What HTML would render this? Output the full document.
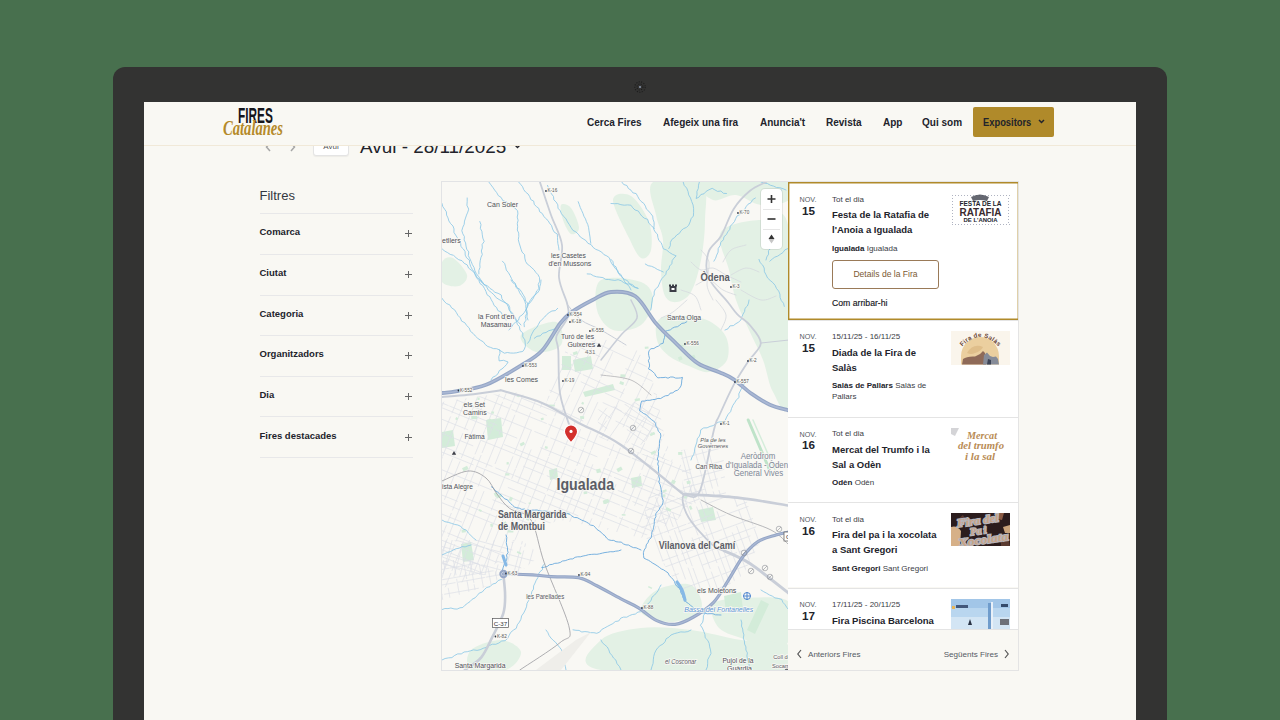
<!DOCTYPE html>
<html><head><meta charset="utf-8">
<style>
*{margin:0;padding:0;box-sizing:border-box}
html,body{width:1280px;height:720px;overflow:hidden;background:#48704e;font-family:"Liberation Sans",sans-serif}
.abs{position:absolute}
#laptop{position:absolute;left:113px;top:67px;width:1054px;height:700px;background:#333332;border-radius:12px 12px 0 0}

#screen{position:absolute;left:144px;top:102px;width:992px;height:640px;background:#f9f8f3;overflow:hidden}
#hdr{position:absolute;left:0;top:0;width:992px;height:44px;background:#f9f8f3;border-bottom:1px solid #f1e9d8;z-index:5}
.nav{position:absolute;top:12px;font-size:12px;font-weight:bold;color:#22232b;white-space:nowrap;line-height:16px}
#expo{position:absolute;left:829px;top:5px;width:81px;height:30px;background:#b08a2a;border-radius:2px}
.filt{position:absolute;left:115px;font-size:10px;font-weight:bold;color:#22232b}
.plus{position:absolute;left:260px;font-size:13px;color:#555;}
.hline{position:absolute;left:115px;width:153px;height:1px;background:#e3e4e6}

.hdri{position:absolute;left:0;top:0;z-index:6}
.pg{position:absolute;left:-144px;top:-102px;width:1280px;height:720px}
#hdr{position:absolute;left:144px;top:102px;width:992px;height:44px;background:#f9f8f3;border-bottom:1px solid #f1e9d8;z-index:5}
.hdri .nav{position:absolute;top:116.7px;font-size:11px;line-height:11px;font-weight:bold;color:#22232b;white-space:nowrap;transform:scaleX(.91);transform-origin:0 0}
#expo{position:absolute;left:973px;top:107px;width:81px;height:30px;background:#b08a2a;border-radius:2px}
.filt{position:absolute;left:259.5px;font-size:9.5px;line-height:9.5px;font-weight:bold;color:#22232b}
.plus{position:absolute;left:405px;width:7px;height:7px}
.plus:before{content:"";position:absolute;left:0;top:3px;width:7px;height:1px;background:#666}
.plus:after{content:"";position:absolute;left:3px;top:0;width:1px;height:7px;background:#666}
.hline{position:absolute;left:259.5px;width:153px;height:1px;background:#e8e8e9}

#list .t{position:absolute;left:44px;white-space:nowrap;color:#22232b}
#list .nov{left:11.5px;font-size:7.2px;line-height:7.2px;color:#555a63}
#list .day{left:14px;font-size:11.7px;line-height:11.7px;font-weight:bold}
#list .sm{font-size:8px;line-height:8px;color:#3a3d45}
#list .loc{line-height:11px;color:#3a3d45}
#list .loc b{color:#22232b}
#list .ttl{font-size:9.5px;line-height:15px;font-weight:bold}
#list .btn{font-size:8.57px;line-height:8.57px;color:#7b5a33}
#list .pgn{font-size:8.07px;line-height:8.07px;color:#555a63}
</style></head><body>
<div id="laptop"></div>
<svg id="cam" width="14" height="14" viewBox="0 0 14 14" style="position:absolute;left:633px;top:80px"><circle cx="7" cy="7" r="5.2" fill="none" stroke="#1e1e1e" stroke-width="1.1" stroke-dasharray="1.2 1.3"/><circle cx="7" cy="7" r="3" fill="none" stroke="#1e1e1e" stroke-width="1.1" stroke-dasharray="1.2 1.2"/><circle cx="7" cy="7" r="1" fill="#8f9bb0"/></svg>
<div id="screen"><div class="pg">
  <!-- date row (clipped by header) -->
  <svg class="abs" style="left:260px;top:139px" width="44" height="16" viewBox="0 0 44 16"><path d="M10 4 L6.5 8 L10 12" stroke="#a6a6a6" stroke-width="1.5" fill="none"/><path d="M31 4 L34.5 8 L31 12" stroke="#a6a6a6" stroke-width="1.5" fill="none"/></svg>
  <div class="abs" style="left:313px;top:131px;width:36px;height:25px;background:#fff;border:1px solid #e4e4e4;border-radius:3px;box-shadow:0 1px 1px rgba(0,0,0,.05)"><div class="abs" style="left:0;width:34px;top:11.2px;font-size:8px;line-height:8px;color:#555;text-align:center">Avui</div></div>
  <div class="abs" style="left:360px;top:138px;font-size:18.9px;line-height:18.9px;color:#22232b;white-space:nowrap">Avui - 28/11/2025</div>
  <svg class="abs" style="left:513px;top:143px" width="9" height="7" viewBox="0 0 9 7"><path d="M1.5 1.5 L4.5 4.5 L7.5 1.5" stroke="#22232b" stroke-width="1.4" fill="none"/></svg>

  <div id="hdr"></div><div class="hdri">
    <div class="abs" style="left:237.5px;top:104.6px;font-size:22px;line-height:22px;font-weight:bold;color:#15151c;transform:scaleX(.537);transform-origin:0 0">FIRES</div>
    <div class="abs" style="left:223px;top:118.2px;font-family:'Liberation Serif',serif;font-style:italic;font-weight:bold;font-size:20px;line-height:20px;color:#b58a2a;transform:scaleX(.73);transform-origin:0 0">Catalanes</div>
    <div class="nav" style="left:587px">Cerca Fires</div>
    <div class="nav" style="left:663px">Afegeix una fira</div>
    <div class="nav" style="left:760px">Anuncia't</div>
    <div class="nav" style="left:826px">Revista</div>
    <div class="nav" style="left:883px">App</div>
    <div class="nav" style="left:922px">Qui som</div>
    <div id="expo"></div>
    <div class="nav" style="left:983px;transform:scaleX(.85)">Expositors</div>
    <svg class="abs" style="left:1038px;top:119px" width="7" height="5" viewBox="0 0 7 5"><path d="M1 1 L3.5 3.5 L6 1" stroke="#22232b" stroke-width="1.5" fill="none"/></svg>
  </div>

  <!-- filters -->
  <div class="abs" style="left:259.5px;top:188.7px;font-size:13px;line-height:13px;color:#333842">Filtres</div>
  <div class="hline" style="top:213px"></div>
  <div class="filt" style="top:227.0px">Comarca</div><div class="plus" style="top:230.0px"></div>
  <div class="hline" style="top:254px"></div>
  <div class="filt" style="top:267.5px">Ciutat</div><div class="plus" style="top:270.5px"></div>
  <div class="hline" style="top:295px"></div>
  <div class="filt" style="top:308.5px">Categoria</div><div class="plus" style="top:311.5px"></div>
  <div class="hline" style="top:335px"></div>
  <div class="filt" style="top:349.0px">Organitzadors</div><div class="plus" style="top:352.0px"></div>
  <div class="hline" style="top:376px"></div>
  <div class="filt" style="top:389.5px">Dia</div><div class="plus" style="top:392.5px"></div>
  <div class="hline" style="top:416px"></div>
  <div class="filt" style="top:430.5px">Fires destacades</div><div class="plus" style="top:433.5px"></div>
  <div class="hline" style="top:457px"></div>

  <!-- map -->
  <div id="map" class="abs" style="left:440.5px;top:181px;width:348px;height:490px;background:#f9f8f4;border:1px solid #e2e3e5;overflow:hidden"><!--MAP--><svg width="347" height="488" viewBox="441 182 347 488" style="position:absolute;left:0;top:0;font-family:'Liberation Sans',sans-serif"><rect x="441" y="182" width="347" height="488" fill="#f9f8f4"/><path d="M652.0 182.0 C659.5 176.5 691.3 175.7 700.0 182.0 C708.7 188.3 704.0 207.0 704.0 220.0 C704.0 233.0 702.3 248.0 700.0 260.0 C697.7 272.0 694.0 285.0 690.0 292.0 C686.0 299.0 680.3 301.3 676.0 302.0 C671.7 302.7 666.7 301.3 664.0 296.0 C661.3 290.7 660.3 279.3 660.0 270.0 C659.7 260.7 662.8 249.2 662.0 240.0 C661.2 230.8 656.7 224.7 655.0 215.0 C653.3 205.3 644.5 187.5 652.0 182.0Z" fill="#e3f1e5" /><path d="M700.0 182.0 C712.7 179.0 773.3 179.0 788.0 182.0 C802.7 185.0 792.7 196.2 788.0 200.0 C783.3 203.8 768.8 205.8 760.0 205.0 C751.2 204.2 743.0 195.8 735.0 195.0 C727.0 194.2 717.8 202.2 712.0 200.0 C706.2 197.8 687.3 185.0 700.0 182.0Z" fill="#e3f1e5" /><path d="M612.0 200.0 C612.3 193.0 624.0 192.3 630.0 196.0 C636.0 199.7 644.7 213.0 648.0 222.0 C651.3 231.0 651.3 244.0 650.0 250.0 C648.7 256.0 643.7 260.0 640.0 258.0 C636.3 256.0 632.7 247.7 628.0 238.0 C623.3 228.3 611.7 207.0 612.0 200.0Z" fill="#e3f1e5" /><path d="M720.0 232.0 C725.3 223.7 748.7 220.3 760.0 220.0 C771.3 219.7 783.3 200.0 788.0 230.0 C792.7 260.0 790.7 373.0 788.0 400.0 C785.3 427.0 776.3 398.7 772.0 392.0 C767.7 385.3 766.0 370.3 762.0 360.0 C758.0 349.7 752.5 340.0 748.0 330.0 C743.5 320.0 738.3 310.0 735.0 300.0 C731.7 290.0 730.5 281.3 728.0 270.0 C725.5 258.7 714.7 240.3 720.0 232.0Z" fill="#e3f1e5" /><path d="M600.0 280.0 C607.3 275.3 631.3 278.7 640.0 282.0 C648.7 285.3 652.0 292.8 652.0 300.0 C652.0 307.2 646.7 320.0 640.0 325.0 C633.3 330.0 619.3 332.5 612.0 330.0 C604.7 327.5 598.0 318.3 596.0 310.0 C594.0 301.7 592.7 284.7 600.0 280.0Z" fill="#e3f1e5" /><path d="M660.0 318.0 C667.3 314.3 689.3 315.2 700.0 318.0 C710.7 320.8 719.7 328.0 724.0 335.0 C728.3 342.0 728.7 353.8 726.0 360.0 C723.3 366.2 714.3 371.0 708.0 372.0 C701.7 373.0 694.7 368.7 688.0 366.0 C681.3 363.3 673.3 360.3 668.0 356.0 C662.7 351.7 657.3 346.3 656.0 340.0 C654.7 333.7 652.7 321.7 660.0 318.0Z" fill="#e3f1e5" /><path d="M560.0 205.0 C561.3 203.0 567.0 204.2 570.0 208.0 C573.0 211.8 578.0 223.7 578.0 228.0 C578.0 232.3 572.7 235.3 570.0 234.0 C567.3 232.7 563.7 224.8 562.0 220.0 C560.3 215.2 558.7 207.0 560.0 205.0Z" fill="#e3f1e5" /><path d="M520.0 335.0 C523.3 330.0 548.3 320.3 555.0 322.0 C561.7 323.7 563.3 340.0 560.0 345.0 C556.7 350.0 541.7 353.7 535.0 352.0 C528.3 350.3 516.7 340.0 520.0 335.0Z" fill="#e3f1e5" /><path d="M712.0 604.0 C716.5 599.0 732.3 598.3 745.0 598.0 C757.7 597.7 780.8 595.0 788.0 602.0 C795.2 609.0 791.0 631.7 788.0 640.0 C785.0 648.3 777.2 652.0 770.0 652.0 C762.8 652.0 753.7 644.0 745.0 640.0 C736.3 636.0 723.5 634.0 718.0 628.0 C712.5 622.0 707.5 609.0 712.0 604.0Z" fill="#e3f1e5" /><path d="M600.0 640.0 C606.7 633.0 625.0 629.7 640.0 628.0 C655.0 626.3 673.3 628.0 690.0 630.0 C706.7 632.0 723.7 637.5 740.0 640.0 C756.3 642.5 780.0 640.0 788.0 645.0 C796.0 650.0 819.3 665.8 788.0 670.0 C756.7 674.2 631.3 675.0 600.0 670.0 C568.7 665.0 593.3 647.0 600.0 640.0Z" fill="#e3f1e5" /><path d="M656.0 590.0 C664.3 585.5 682.7 581.7 690.0 585.0 C697.3 588.3 703.3 603.8 700.0 610.0 C696.7 616.2 680.0 621.7 670.0 622.0 C660.0 622.3 642.3 617.3 640.0 612.0 C637.7 606.7 647.7 594.5 656.0 590.0Z" fill="#e3f1e5" /><path d="M470.0 650.0 C475.0 645.0 491.7 639.7 500.0 640.0 C508.3 640.3 519.2 647.0 520.0 652.0 C520.8 657.0 513.3 667.0 505.0 670.0 C496.7 673.0 475.8 673.3 470.0 670.0 C464.2 666.7 465.0 655.0 470.0 650.0Z" fill="#e3f1e5" /><path d="M441.0 262.0 C442.8 258.0 447.8 255.8 452.0 258.0 C456.2 260.2 465.0 270.3 466.0 275.0 C467.0 279.7 462.2 284.8 458.0 286.0 C453.8 287.2 443.8 286.0 441.0 282.0 C438.2 278.0 439.2 266.0 441.0 262.0Z" fill="#e3f1e5" /><path d="M561.0 356.0 L570.0 356.0 L570.0 370.0 L561.0 370.0Z" fill="#d3ecd9" /><path d="M572.0 360.0 L590.0 356.0 L592.0 369.0 L574.0 372.0Z" fill="#d3ecd9" /><path d="M582.0 392.0 L612.0 384.0 L614.0 390.0 L584.0 397.0Z" fill="#d3ecd9" /><path d="M485.0 420.0 L500.0 418.0 L502.0 437.0 L487.0 440.0Z" fill="#d3ecd9" /><path d="M441.0 432.0 L452.0 430.0 L454.0 446.0 L441.0 448.0Z" fill="#d3ecd9" /><path d="M460.0 544.0 L470.0 542.0 L473.0 560.0 L462.0 562.0Z" fill="#d3ecd9" /><path d="M697.0 510.0 L712.0 507.0 L715.0 520.0 L700.0 522.0Z" fill="#d3ecd9" /><path d="M746.0 630.0 L760.0 600.0 L768.0 604.0 L754.0 634.0Z" fill="#d3ecd9" /><path d="M723.0 596.0 L740.0 592.0 L742.0 610.0 L725.0 612.0Z" fill="#d3ecd9" /><path d="M548.0 470.0 L556.0 468.0 L557.0 478.0 L549.0 480.0Z" fill="#d3ecd9" /><path d="M630.0 478.0 L640.0 476.0 L641.0 486.0 L631.0 488.0Z" fill="#d3ecd9" /><clipPath id="cg1"><path d="M552.0 374.0 L566.0 348.0 L600.0 338.0 L640.0 352.0 L655.0 390.0 L662.0 430.0 L672.0 462.0 L620.0 448.0 L580.0 425.0 L545.0 405.0Z" fill="#000" /></clipPath><g clip-path="url(#cg1)"><path d="M560.1 263.4L593.8 279.1M596.0 280.2L633.4 297.6M633.5 297.6L680.5 319.6M681.3 320.0L735.5 345.2M738.5 346.6L769.2 360.9M554.3 275.8L602.7 298.3M605.4 299.6L644.9 318.0M647.7 319.3L683.5 336.0M683.6 336.0L731.9 358.6M734.5 359.8L783.4 382.6M550.4 284.3L595.7 305.4M599.1 307.0L648.0 329.8M669.0 339.6L706.4 357.1M708.3 357.9L734.8 370.3M545.2 295.4L595.2 318.7M668.8 353.1L718.9 376.4M556.9 310.8L570.0 316.9M571.5 317.6L587.3 325.0M590.1 326.3L638.7 349.0M641.0 350.0L652.1 355.2M704.1 379.5L758.4 404.8M535.8 315.4L546.3 320.3M547.8 321.0L584.5 338.1M584.7 338.2L633.1 360.8M636.5 362.4L686.2 385.6M687.9 386.3L720.5 401.6M570.3 343.3L598.9 356.7M624.4 368.5L658.3 384.4M659.8 385.1L695.1 401.5M697.4 402.6L735.1 420.2M526.9 334.6L566.8 353.1M569.3 354.3L611.8 374.2M652.7 393.2L682.4 407.1M683.6 407.6L709.1 419.5M710.4 420.1L746.5 437.0M521.4 346.4L531.7 351.2M534.4 352.4L557.5 363.2M560.4 364.5L580.3 373.8M581.8 374.5L622.5 393.5M649.5 406.1L697.3 428.4M518.3 353.1L532.8 359.8M579.8 381.7L601.5 391.9M603.8 392.9L649.4 414.2M649.9 414.4L672.2 424.8M673.2 425.3L697.9 436.8M601.7 402.5L620.9 411.4M623.9 412.8L663.0 431.1M664.1 431.6L688.6 443.0M688.8 443.1L724.6 459.8M509.5 371.9L559.5 395.2M614.6 421.0L624.3 425.5M624.9 425.7L647.6 436.3M679.5 451.2L704.0 462.6M503.6 384.5L548.1 405.2M548.9 405.6L582.2 421.1M630.6 443.7L677.0 465.3M679.3 466.4L727.4 488.8M499.6 393.2L532.5 408.6M534.2 409.4L578.5 430.0M578.7 430.1L593.5 437.0M647.3 462.1L679.1 476.9M680.2 477.5L705.2 489.1M494.7 403.7L512.4 412.0M512.8 412.2L547.1 428.2M548.4 428.8L561.1 434.7M562.5 435.3L598.9 452.3M600.3 453.0L645.7 474.1M647.2 474.9L673.2 487.0M675.7 488.2L703.9 501.3M490.3 413.0L523.7 428.5M523.9 428.7L552.3 441.9M555.4 443.4L606.9 467.4M610.2 468.9L655.1 489.8M656.8 490.6L671.4 497.4M673.8 498.6L723.1 521.5M484.3 425.9L518.9 442.0M521.1 443.0L530.4 447.4M533.2 448.7L544.2 453.8M544.6 454.0L593.6 476.8M593.6 476.9L640.8 498.9M480.1 434.9L525.4 456.0M528.1 457.3L560.4 472.4M604.0 492.7L627.7 503.8M630.8 505.2L650.8 514.5M651.7 514.9L688.7 532.2M476.0 443.6L503.1 456.2M504.6 457.0L517.4 462.9M521.0 464.6L548.7 477.5M549.3 477.8L589.7 496.6M592.1 497.8L624.6 512.9M627.0 514.0L676.7 537.2M742.2 350.2L718.6 400.8M717.8 402.4L698.4 444.1M698.0 445.0L689.5 463.1M689.0 464.3L679.9 483.9M678.2 487.3L667.8 509.8M667.1 511.3L644.8 559.0M736.0 347.3L731.3 357.5M730.6 358.8L722.8 375.7M722.2 376.9L701.6 421.0M700.0 424.6L685.6 455.4M662.0 506.0L647.6 536.9M705.4 386.7L696.3 406.1M675.2 451.5L665.8 471.5M665.4 472.5L657.2 490.0M655.8 493.1L632.5 543.0M717.3 338.7L704.2 366.9M697.4 381.5L685.6 406.8M684.4 409.2L680.1 418.6M679.3 420.2L664.8 451.2M663.9 453.4L639.4 505.7M638.5 507.7L631.8 522.2M686.2 384.6L662.1 436.3M660.8 439.1L640.6 482.5M639.4 484.9L621.4 523.6M696.8 329.1L672.3 381.7M671.4 383.7L664.8 397.8M664.2 399.1L644.8 440.7M643.8 442.8L635.7 460.1M618.5 497.1L607.2 521.2M688.8 325.4L670.9 363.8M670.4 364.9L662.5 382.0M661.2 384.5L641.1 427.8M639.8 430.5L628.0 455.8M627.4 457.2L604.7 505.8M603.8 507.6L594.4 527.9M681.0 321.7L668.2 349.0M655.1 377.3L645.1 398.6M644.9 399.0L624.2 443.4M623.9 444.1L615.7 461.7M614.4 464.4L593.0 510.4M672.9 317.9L660.3 345.1M659.4 347.0L643.2 381.8M642.7 382.7L622.0 427.2M596.9 480.9L581.0 515.0M659.4 311.6L640.6 351.8M639.2 354.9L624.7 385.9M623.5 388.5L619.2 397.7M618.1 400.1L603.5 431.5M602.7 433.1L594.4 451.0M594.3 451.1L579.5 482.8M654.9 309.5L633.9 354.5M633.8 354.7L622.0 380.0M605.7 415.0L583.1 463.5M582.8 464.0L560.5 511.9M642.7 303.8L622.8 346.4M596.8 402.2L576.6 445.6M576.4 446.0L571.2 457.0M570.9 457.7L563.3 474.0M562.1 476.6L546.5 510.0M635.8 300.6L621.8 330.7M611.8 352.1L599.9 377.7M599.0 379.7L582.1 415.8M582.1 415.8L573.5 434.3M573.3 434.8L559.3 464.7M559.0 465.5L551.1 482.3M550.8 482.9L546.0 493.2M625.8 295.9L620.3 307.7M619.5 309.3L606.7 336.9M606.6 337.1L593.8 364.4M593.8 364.5L569.2 417.3M569.0 417.7L554.7 448.2M553.7 450.5L542.1 475.2M542.1 475.4L522.5 517.5M616.8 291.8L592.9 343.1M592.5 344.0L582.6 365.1M581.6 367.4L570.0 392.1M568.9 394.6L544.2 447.6M544.2 447.6L539.3 458.0M539.0 458.6L534.0 469.3M532.9 471.7L509.7 521.6M584.9 336.4L580.0 347.0M578.9 349.2L554.7 401.2M554.2 402.2L532.0 449.8M531.4 451.2L520.1 475.4M600.3 284.1L580.4 326.7M562.5 365.1L549.5 393.0M548.2 395.8L533.8 426.7M533.5 427.3L514.0 469.0M590.1 279.3L575.5 310.4M574.3 313.0L569.6 323.1M568.3 325.9L549.8 365.6M549.4 366.5L527.4 413.8M525.9 417.0L503.2 465.5M579.1 274.2L567.8 298.4M554.9 326.2L538.6 361.0M538.5 361.3L520.5 399.8M520.5 400.0L513.0 416.0M512.0 418.1L507.6 427.7M505.9 431.2L497.0 450.2M496.3 451.7L475.6 496.2M571.1 270.5L562.9 288.1M562.8 288.3L541.1 334.8M541.1 334.9L516.4 387.8M514.9 391.0L508.9 404.0M508.5 404.8L486.8 451.4M561.7 266.1L548.1 295.3M546.6 298.4L529.9 334.4M529.5 335.1L513.9 368.6M512.7 371.2L506.8 383.8M506.0 385.6L500.2 397.9M499.0 400.5L485.8 428.8M484.8 430.9L476.1 449.7" stroke="#dde0e6" stroke-width="0.7" fill="none"/></g><clipPath id="cg1b"><path d="M441.0 402.0 L480.0 396.0 L520.0 392.0 L545.0 405.0 L580.0 425.0 L620.0 448.0 L672.0 462.0 L688.0 468.0 L695.0 500.0 L676.0 520.0 L640.0 538.0 L600.0 528.0 L560.0 520.0 L520.0 532.0 L500.0 560.0 L470.0 580.0 L441.0 588.0Z" fill="#000" /></clipPath><g clip-path="url(#cg1b)"><path d="M456.0 224.7L485.3 236.6M557.8 265.9L610.2 287.1M668.5 310.6L700.3 323.4M758.3 346.9L810.9 368.1M811.3 368.3L854.0 385.6M452.5 233.5L463.6 238.0M464.6 238.4L494.0 250.3M496.7 251.4L540.6 269.1M541.0 269.3L564.1 278.6M564.4 278.7L580.8 285.4M641.2 309.8L667.7 320.5M668.9 321.0L699.6 333.4M762.4 358.7L785.4 368.0M788.4 369.3L798.2 373.2M800.1 374.0L834.3 387.8M450.3 239.0L495.2 257.2M544.7 277.1L562.5 284.4M564.1 285.0L589.1 295.1M591.1 295.9L604.7 301.4M605.6 301.8L652.1 320.5M653.1 320.9L664.4 325.5M710.3 344.1L731.0 352.4M733.8 353.6L779.7 372.1M782.8 373.3L817.6 387.4M818.3 387.7L828.3 391.7M446.0 249.5L476.9 262.0M480.4 263.4L527.4 282.4M528.9 283.0L562.2 296.5M605.9 314.1L634.1 325.5M635.8 326.2L682.3 345.0M685.8 346.4L702.3 353.1M735.7 366.6L788.1 387.8M788.3 387.8L824.2 402.3M486.7 271.4L526.9 287.6M654.6 339.2L678.5 348.9M679.6 349.3L695.0 355.5M698.6 357.0L711.5 362.2M712.3 362.5L725.2 367.7M728.0 368.9L776.1 388.3M779.2 389.5L788.7 393.4M792.2 394.8L804.7 399.9M806.5 400.6L828.2 409.4M441.2 261.4L494.9 283.1M518.3 292.5L557.5 308.4M557.7 308.5L602.2 326.4M650.5 345.9L704.3 367.7M705.7 368.3L720.0 374.0M723.6 375.5L745.9 384.5M746.4 384.7L761.6 390.8M765.0 392.2L777.8 397.4M438.0 269.3L491.3 290.9M494.0 291.9L517.8 301.6M519.0 302.1L563.0 319.8M565.1 320.7L595.9 333.1M693.0 372.4L710.1 379.2M724.1 384.9L773.8 405.0M773.8 405.0L823.4 425.1M434.4 278.2L468.0 291.8M468.4 291.9L502.7 305.8M503.2 306.0L540.3 321.0M542.2 321.8L568.8 332.5M661.0 369.8L715.6 391.8M716.1 392.0L748.5 405.1M749.8 405.7L789.0 421.5M792.6 422.9L822.9 435.2M431.1 286.5L486.1 308.7M487.7 309.4L525.6 324.7M527.2 325.3L575.8 344.9M576.0 345.0L624.9 364.8M628.5 366.3L654.8 376.9M656.8 377.7L707.1 398.0M710.3 399.3L752.5 416.4M753.6 416.8L786.3 430.0M429.4 290.7L448.8 298.5M451.1 299.4L466.9 305.8M468.1 306.3L490.4 315.3M492.4 316.1L544.4 337.1M598.2 358.9L628.0 370.9M628.4 371.1L678.5 391.3M680.2 392.0L730.8 412.4M731.5 412.7L778.9 431.9M779.3 432.0L789.8 436.3M789.9 436.3L837.7 455.6M425.9 299.2L458.9 312.5M461.3 313.4L501.1 329.5M501.5 329.7L556.2 351.8M556.5 351.9L586.2 363.9M589.9 365.4L602.2 370.4M635.9 384.0L660.6 393.9M662.7 394.8L713.0 415.1M714.4 415.7L727.8 421.1M727.9 421.2L780.5 442.4M782.7 443.3L795.9 448.6M797.6 449.3L846.6 469.1M421.9 309.2L461.8 325.3M486.2 335.2L520.1 348.9M569.5 368.9L613.0 386.4M613.2 386.5L642.5 398.4M643.3 398.7L692.9 418.7M696.0 420.0L748.7 441.3M752.1 442.6L779.8 453.8M780.5 454.1L791.5 458.5M419.9 314.0L447.2 325.1M448.2 325.5L469.7 334.1M470.9 334.6L485.3 340.5M487.0 341.1L522.4 355.5M525.0 356.5L544.3 364.3M546.6 365.2L564.0 372.2M565.4 372.8L599.7 386.7M602.0 387.6L631.8 399.7M634.7 400.8L683.9 420.7M710.3 431.4L729.8 439.3M760.6 451.7L778.2 458.8M779.4 459.3L822.6 476.7M416.7 322.0L465.4 341.7M467.4 342.5L516.7 362.4M555.6 378.1L569.2 383.6M635.3 410.3L679.3 428.1M679.3 428.1L720.0 444.6M721.3 445.1L752.8 457.8M753.7 458.2L795.3 475.0M414.5 327.6L449.4 341.7M452.1 342.8L469.4 349.8M470.1 350.1L498.3 361.5M498.7 361.6L510.5 366.4M511.3 366.7L543.9 379.9M581.7 395.2L614.9 408.6M615.1 408.7L637.2 417.6M657.2 425.7L686.6 437.5M690.2 439.0L708.1 446.2M710.0 447.0L728.5 454.5M732.1 455.9L778.1 474.5M781.4 475.8L795.2 481.4M442.9 348.3L487.5 366.3M490.0 367.3L511.8 376.1M513.2 376.7L562.8 396.7M564.7 397.5L605.8 414.1M608.8 415.3L630.0 423.9M632.1 424.8L659.4 435.8M660.0 436.0L699.0 451.8M737.6 467.4L780.6 484.8M780.8 484.8L815.9 499.0M427.7 350.7L459.4 363.5M460.0 363.7L494.4 377.6M496.7 378.5L513.4 385.3M515.7 386.2L566.0 406.6M566.0 406.6L579.2 411.9M613.3 425.6L634.7 434.3M634.8 434.3L657.1 443.3M657.7 443.6L668.5 448.0M669.7 448.5L724.0 470.4M727.0 471.6L754.3 482.6M755.9 483.3L796.1 499.5M404.9 351.4L451.2 370.1M452.1 370.4L480.6 382.0M481.8 382.4L517.6 396.9M519.8 397.8L542.6 407.0M542.7 407.0L567.6 417.1M569.8 418.0L591.3 426.7M593.6 427.6L633.5 443.8M635.5 444.5L664.5 456.3M664.8 456.4L710.9 475.0M711.2 475.1L763.5 496.2M765.8 497.2L795.4 509.1M429.1 368.3L461.5 381.4M462.4 381.8L514.6 402.8M514.6 402.9L545.8 415.5M598.2 436.6L638.8 453.0M640.5 453.7L663.7 463.1M664.2 463.3L702.5 478.8M718.1 485.1L731.2 490.4M733.2 491.2L778.1 509.3M399.5 364.6L440.0 380.9M443.6 382.4L453.2 386.2M455.7 387.2L507.9 408.3M510.5 409.4L545.8 423.6M547.5 424.3L584.7 439.4M585.8 439.8L629.3 457.4M631.0 458.1L652.2 466.6M700.1 486.0L718.8 493.6M719.0 493.6L739.4 501.9M741.7 502.8L762.1 511.1M762.5 511.2L780.1 518.3M395.1 375.5L430.5 389.9M432.1 390.5L443.3 395.0M446.1 396.1L472.2 406.7M473.2 407.1L492.6 414.9M493.4 415.2L530.7 430.3M533.4 431.4L547.5 437.1M549.3 437.8L576.1 448.7M577.7 449.3L596.3 456.8M641.8 475.2L692.4 495.6M695.0 496.7L749.7 518.8M752.6 520.0L803.6 540.6M418.2 393.8L447.6 405.7M448.4 406.0L496.2 425.3M602.1 468.1L653.2 488.8M654.3 489.2L673.6 497.0M675.7 497.8L703.4 509.1M755.4 530.1L802.7 549.2M410.1 395.3L461.8 416.2M462.2 416.4L491.3 428.1M494.6 429.5L516.2 438.2M539.4 447.6L579.5 463.8M582.9 465.1L610.6 476.3M613.0 477.3L649.8 492.2M650.3 492.4L686.2 506.9M689.5 508.2L714.7 518.4M715.9 518.9L730.4 524.8M732.5 525.6L760.6 536.9M761.7 537.4L793.5 550.2M386.3 397.3L418.0 410.1M418.6 410.3L467.2 429.9M503.1 444.5L529.2 455.0M529.2 455.0L563.7 469.0M565.6 469.7L595.8 481.9M616.8 490.4L666.2 510.4M669.2 511.5L690.5 520.2M743.9 541.8L798.6 563.9M384.5 401.7L428.8 419.6M480.2 440.4L530.1 460.6M530.4 460.7L580.9 481.1M581.3 481.2L629.0 500.5M631.5 501.5L642.1 505.8M644.7 506.9L655.7 511.3M659.2 512.7L678.4 520.5M681.2 521.6L719.2 537.0M721.8 538.0L731.7 542.0M733.7 542.8L788.0 564.8M381.5 409.3L430.0 428.9M431.9 429.6L472.2 445.9M522.3 466.2L542.5 474.3M545.8 475.7L575.4 487.6M577.3 488.4L619.0 505.2M620.2 505.7L665.0 523.8M681.5 530.5L718.3 545.4M721.9 546.8L751.1 558.6M751.5 558.8L777.0 569.1M377.0 420.3L416.4 436.2M418.8 437.2L456.0 452.2M457.8 453.0L491.4 466.5M494.4 467.8L512.6 475.1M513.7 475.6L562.3 495.2M564.1 495.9L593.9 508.0M594.7 508.3L616.1 516.9M618.2 517.8L654.2 532.3M675.1 540.8L710.6 555.1M713.0 556.1L760.0 575.1M374.9 425.5L406.8 438.4M409.8 439.6L433.8 449.3M436.1 450.2L472.5 464.9M475.7 466.2L509.0 479.7M509.3 479.8L544.2 493.9M546.2 494.7L571.6 504.9M571.7 505.0L588.3 511.7M591.4 513.0L627.6 527.6M630.3 528.7L669.0 544.3M692.1 553.7L714.7 562.8M717.9 564.0L765.1 583.1M371.9 432.8L413.7 449.7M506.9 487.4L530.4 496.9M531.0 497.1L577.3 515.8M651.8 545.9L673.4 554.6M718.1 572.7L770.4 593.8M368.8 440.6L412.8 458.4M414.1 458.9L439.9 469.3M440.7 469.7L490.9 490.0M493.3 490.9L525.1 503.8M621.5 542.7L676.7 565.0M678.2 565.6L697.0 573.2M697.8 573.6L742.2 591.5M745.3 592.7L771.1 603.1M365.5 448.7L392.3 459.6M393.9 460.2L433.0 476.0M491.6 499.7L513.7 508.6M516.5 509.7L563.9 528.9M564.6 529.2L607.3 546.4M608.7 547.0L645.3 561.8M362.3 456.7L400.5 472.1M401.6 472.6L439.6 487.9M465.7 498.5L496.9 511.1M498.4 511.7L531.9 525.2M535.1 526.5L579.8 544.6M580.1 544.7L627.3 563.8M629.4 564.7L661.3 577.5M662.9 578.2L713.3 598.5M714.5 599.0L761.5 618.0M373.1 467.7L394.1 476.2M431.2 491.2L456.7 501.4M459.7 502.7L495.8 517.3M528.8 530.6L538.2 534.4M539.0 534.7L585.0 553.3M585.7 553.6L630.4 571.7M667.5 586.6L686.4 594.3M687.9 594.9L707.5 602.8M710.1 603.8L745.4 618.1M357.4 468.9L387.3 481.0M388.6 481.5L438.8 501.8M439.4 502.1L459.6 510.2M460.7 510.6L511.1 531.0M553.7 548.2L566.2 553.3M568.5 554.2L579.0 558.4M672.6 596.3L707.7 610.4M707.8 610.5L721.2 615.9M353.4 478.7L404.0 499.2M407.3 500.5L461.0 522.2M510.8 542.3L539.0 553.7M539.4 553.9L559.6 562.0M575.8 568.6L630.1 590.5M682.0 611.5L723.7 628.4M351.6 483.1L404.5 504.5M404.8 504.6L426.1 513.2M523.1 552.4L550.2 563.4M550.8 563.6L585.4 577.6M588.2 578.7L612.3 588.5M614.3 589.3L652.7 604.8M653.7 605.2L694.9 621.8M697.4 622.8L751.4 644.6M347.6 493.0L400.7 514.4M403.5 515.6L444.4 532.1M446.3 532.9L482.5 547.5M485.0 548.5L536.4 569.3M539.4 570.5L555.3 576.9M557.6 577.9L610.4 599.2M611.0 599.4L665.5 621.5M668.2 622.5L704.9 637.3M344.3 501.2L367.7 510.6M413.9 529.3L468.0 551.2M469.0 551.6L499.8 564.0M500.7 564.4L548.8 583.8M552.0 585.1L568.8 591.9M570.2 592.5L602.4 605.5M603.5 605.9L647.0 623.5M648.1 623.9L693.9 642.4M696.1 643.3L714.0 650.6M715.8 651.3L749.2 664.8M341.1 509.3L386.7 527.7M386.7 527.7L440.5 549.4M440.9 549.6L458.4 556.7M459.1 556.9L485.6 567.7M529.4 585.4L567.8 600.9M569.0 601.3L608.0 617.1M610.1 618.0L642.2 630.9M706.7 657.0L753.8 676.0M402.0 540.9L429.9 552.2M432.7 553.4L446.4 558.9M446.9 559.1L495.9 578.9M497.1 579.4L527.1 591.5M528.6 592.1L581.8 613.6M583.6 614.3L632.8 634.2M633.5 634.5L681.5 653.9M684.8 655.2L732.2 674.4M336.6 520.4L386.3 540.5M387.6 541.0L405.1 548.1M408.3 549.4L423.6 555.6M425.9 556.5L459.3 570.0M482.3 579.3L517.7 593.6M521.1 595.0L539.7 602.5M542.0 603.4L589.9 622.7M590.3 622.9L644.9 645.0M646.2 645.5L701.3 667.8M411.3 558.8L434.6 568.2M495.0 592.6L537.0 609.6M539.6 610.6L575.7 625.2M577.8 626.0L601.2 635.5M604.6 636.9L630.9 647.5M634.5 648.9L667.4 662.2M668.7 662.8L684.9 669.3M329.1 538.8L346.7 545.9M347.2 546.1L363.3 552.6M364.7 553.1L398.9 567.0M476.7 598.4L492.4 604.7M494.0 605.4L543.1 625.2M544.1 625.6L590.4 644.3M590.5 644.4L630.5 660.5M632.5 661.3L648.4 667.8M651.6 669.1L681.9 681.3M684.2 682.2L725.9 699.1M327.1 543.9L359.8 557.1M384.7 567.1L404.2 575.0M458.9 597.1L503.6 615.2M504.9 615.7L537.5 628.9M538.8 629.4L558.0 637.2M560.7 638.3L598.0 653.3M599.7 654.0L637.4 669.3M637.5 669.3L685.9 688.9M687.2 689.4L740.9 711.1M324.7 549.7L354.3 561.7M355.6 562.2L369.4 567.8M370.4 568.2L415.0 586.2M416.1 586.6L463.6 605.9M463.9 606.0L486.2 615.0M541.6 637.4L558.0 644.0M558.8 644.3L585.3 655.0M585.4 655.1L617.4 668.0M619.8 669.0L667.4 688.2M669.7 689.1L691.5 697.9M693.9 698.9L705.6 703.6M343.5 566.8L361.7 574.1M363.7 574.9L391.4 586.1M392.6 586.6L411.9 594.4M414.1 595.3L427.6 600.7M483.8 623.5L525.4 640.3M619.4 678.2L660.0 694.7M663.2 695.9L712.2 715.7M317.8 566.9L354.4 581.7M357.6 583.0L406.2 602.6M408.2 603.4L449.7 620.2M470.2 628.5L492.3 637.4M494.5 638.3L525.3 650.7M525.7 650.9L575.5 671.0M577.1 671.7L620.7 689.3M622.3 689.9L645.2 699.2M681.5 713.8L715.3 727.5M315.2 573.3L360.2 591.5M363.3 592.7L386.9 602.3M388.1 602.7L432.1 620.5M461.3 632.3L479.9 639.9M483.4 641.3L503.7 649.5M507.1 650.8L561.1 672.6M563.9 673.8L616.3 695.0M619.2 696.1L642.3 705.4M644.2 706.2L675.3 718.8M677.8 719.8L719.5 736.6M336.7 589.4L387.5 609.9M418.3 622.4L473.5 644.7M522.4 664.5L533.2 668.8M533.3 668.8L555.2 677.7M556.2 678.1L577.0 686.5M578.3 687.0L611.5 700.5M615.0 701.9L627.5 706.9M627.8 707.0L680.2 728.2M682.6 729.2L729.6 748.2M309.2 588.2L347.6 603.7M350.4 604.8L373.6 614.2M374.5 614.6L417.4 631.9M418.0 632.2L443.7 642.6M484.2 658.9L530.7 677.7M533.9 679.0L586.8 700.3M586.8 700.4L600.1 705.7M603.3 707.0L646.2 724.3M648.2 725.2L662.8 731.1M666.5 732.6L685.3 740.2M305.6 597.0L331.1 607.3M387.6 630.1L431.4 647.8M432.8 648.4L477.1 666.3M477.8 666.6L487.1 670.4M489.9 671.5L501.2 676.0M502.4 676.5L521.3 684.2M522.0 684.4L558.4 699.1M559.7 699.7L608.6 719.4M610.5 720.2L650.6 736.4M651.3 736.7L704.8 758.3M832.5 377.7L817.2 415.6M803.0 450.8L780.9 505.5M779.4 509.2L761.2 554.2M739.3 608.4L724.6 644.8M683.8 745.9L679.9 755.6M824.6 374.5L803.6 426.3M802.6 428.9L796.0 445.2M760.3 533.5L755.3 546.0M754.2 548.7L744.3 573.1M743.1 576.1L724.2 622.9M723.2 625.4L704.5 671.7M703.2 674.9L684.1 722.1M682.8 725.3L668.9 759.8M813.7 370.1L803.6 395.0M802.3 398.2L785.7 439.2M785.0 441.0L771.8 473.8M771.5 474.5L764.8 491.2M764.0 493.1L758.9 505.7M758.7 506.1L747.7 533.3M740.0 552.4L720.8 600.1M720.3 601.3L700.8 649.5M683.2 692.9L678.5 704.6M677.1 708.1L657.4 757.0M808.6 368.1L790.7 412.4M789.4 415.7L780.7 437.3M779.6 439.9L771.3 460.4M770.4 462.7L761.6 484.5M760.7 486.8L739.0 540.5M738.7 541.1L725.5 573.9M724.8 575.7L703.9 627.3M703.2 629.2L690.6 660.3M689.9 662.0L677.7 692.2M799.8 364.5L778.3 417.8M772.4 432.3L760.5 461.6M759.2 464.9L736.9 520.2M735.5 523.6L721.1 559.2M720.9 559.8L711.4 583.2M710.9 584.6L706.2 596.0M704.9 599.4L685.3 648.0M684.7 649.3L672.5 679.4M671.4 682.3L661.9 705.7M661.1 707.7L641.6 756.0M791.3 361.1L771.0 411.3M770.0 413.6L763.8 429.0M762.9 431.3L757.2 445.4M756.3 447.6L745.3 474.8M744.0 478.0L735.1 500.2M733.9 503.0L719.0 539.9M718.2 542.0L700.6 585.5M700.2 586.6L684.3 626.0M683.6 627.7L663.0 678.5M662.2 680.5L647.8 716.2M647.5 716.8L631.3 757.1M755.7 424.4L742.5 457.1M741.2 460.3L733.2 480.1M732.7 481.2L724.6 501.4M724.2 502.4L710.4 536.4M687.5 593.1L671.0 634.1M669.9 636.7L658.7 664.5M657.6 667.3L641.5 707.0M640.5 709.5L635.5 721.9M634.2 725.2L612.2 779.5M772.7 353.5L766.3 369.4M766.0 370.1L758.2 389.5M757.8 390.5L738.1 439.2M736.9 442.1L715.0 496.4M713.7 499.5L693.2 550.3M692.7 551.6L685.7 569.0M685.1 570.4L676.5 591.7M675.5 594.1L666.9 615.3M666.2 617.2L649.1 659.4M648.2 661.8L627.6 712.6M627.0 714.3L609.3 758.1M767.4 351.4L756.6 378.2M755.5 381.0L746.1 404.3M745.9 404.6L731.0 441.6M729.8 444.5L710.0 493.6M700.1 518.1L692.2 537.7M692.0 538.2L671.2 589.7M669.7 593.3L650.9 639.9M649.7 642.8L639.3 668.6M638.6 670.2L621.8 711.9M620.9 714.0L606.6 749.6M757.8 347.5L743.7 382.6M742.6 385.3L736.8 399.5M707.5 472.1L698.2 495.0M697.4 497.0L689.4 516.9M689.3 517.2L678.2 544.6M677.8 545.5L671.3 561.7M671.0 562.4L650.4 613.5M649.0 616.8L635.3 650.7M608.0 718.4L599.4 739.7M748.2 343.6L740.2 363.4M739.4 365.2L734.6 377.3M733.6 379.7L727.0 396.0M726.1 398.2L720.7 411.6M719.5 414.5L707.3 444.9M706.9 445.7L684.5 501.3M683.6 503.4L679.7 513.1M679.7 513.1L667.7 542.8M667.4 543.7L657.9 567.1M657.5 568.2L644.3 600.8M643.4 602.9L621.9 656.2M620.5 659.7L614.7 674.0M614.3 674.9L593.1 727.5M739.4 340.1L733.1 355.5M731.9 358.5L712.8 405.7M712.8 405.8L708.6 416.2M707.5 418.8L696.8 445.4M695.6 448.4L691.7 458.0M669.6 512.8L654.4 550.2M653.3 553.1L637.2 593.0M637.1 593.2L630.0 610.8M615.7 646.0L607.3 667.0M606.8 668.1L588.2 714.2M587.7 715.4L571.2 756.3M731.4 336.9L712.1 384.7M697.9 419.9L683.5 455.5M683.4 455.8L663.6 504.8M662.9 506.3L656.1 523.4M655.0 526.0L646.2 547.7M645.4 549.6L632.4 581.9M632.3 582.1L621.6 608.7M621.0 610.2L616.9 620.2M616.7 620.9L598.6 665.6M597.1 669.2L588.0 691.9M587.9 691.9L575.0 724.0M723.2 333.5L709.3 368.0M707.9 371.4L699.5 392.2M699.2 392.8L684.5 429.4M684.0 430.5L675.5 451.7M674.6 453.9L657.5 496.2M657.1 497.1L639.3 541.2M639.1 541.7L616.8 596.8M588.4 667.1L581.4 684.5M574.3 702.1L561.6 733.5M716.0 330.6L698.7 373.5M676.7 428.0L669.7 445.3M668.4 448.4L658.0 474.2M657.7 475.0L638.5 522.5M638.0 523.8L618.9 571.0M618.9 571.0L607.2 600.0M607.0 600.4L595.9 627.9M594.6 631.1L573.6 683.2M573.5 683.4L562.9 709.7M705.9 326.6L697.0 348.8M696.0 351.3L687.2 372.9M686.6 374.6L679.2 392.9M678.5 394.4L670.5 414.3M669.3 417.2L651.7 460.9M651.6 461.0L633.6 505.7M600.5 587.6L590.2 613.0M590.2 613.1L569.7 663.8M569.4 664.4L553.6 703.6M699.6 324.0L682.8 365.6M682.7 365.9L668.3 401.5M668.2 401.7L663.8 412.7M662.7 415.4L640.7 469.9M639.4 473.1L622.3 515.3M621.7 517.0L602.1 565.4M601.3 567.3L584.1 610.0M583.4 611.7L569.9 645.1M568.9 647.7L560.0 669.5M559.3 671.2L553.7 685.3M552.2 688.9L538.0 724.1M690.9 320.5L680.2 346.9M678.8 350.5L668.2 376.7M667.2 379.1L663.4 388.7M662.5 390.7L643.4 438.0M643.3 438.2L621.5 492.3M607.0 528.2L598.7 548.7M590.9 568.0L573.4 611.3M572.4 613.7L551.6 665.3M550.1 668.9L541.1 691.3M682.6 317.2L661.6 369.3M661.5 369.5L654.9 385.7M654.4 387.0L649.6 398.9M649.1 400.1L628.4 451.3M615.1 484.2L600.9 519.6M600.1 521.5L591.4 543.0M586.1 556.0L577.8 576.5M577.8 576.7L558.5 624.4M557.4 627.0L545.6 656.2M544.4 659.3L534.7 683.3M534.5 683.7L513.6 735.5M673.6 313.5L667.5 328.8M666.3 331.7L658.2 351.8M636.7 404.9L614.8 459.3M614.5 459.9L592.3 514.8M590.8 518.5L586.5 529.2M585.8 530.9L570.7 568.4M569.4 571.5L563.7 585.7M563.2 586.9L541.6 640.5M533.9 659.5L526.2 678.4M525.0 681.3L515.2 705.6M666.9 310.8L660.9 325.6M659.9 328.2L643.4 368.9M642.4 371.4L623.0 419.4M617.1 433.9L608.3 455.9M607.4 458.0L591.9 496.5M590.9 499.0L579.9 526.0M561.5 571.7L556.3 584.4M555.2 587.2L544.8 613.0M543.5 616.2L531.6 645.6M655.7 306.3L642.7 338.5M642.4 339.3L626.9 377.6M625.6 380.8L618.6 398.3M591.9 464.3L572.0 513.6M571.3 515.3L557.4 549.7M556.2 552.6L541.5 589.1M534.9 605.3L524.3 631.5M523.8 632.8L503.3 683.5M649.3 303.7L631.7 347.2M630.8 349.5L620.7 374.4M619.8 376.6L599.2 427.6M598.0 430.6L590.3 449.7M589.9 450.6L568.8 502.9M568.4 504.0L555.8 535.0M554.9 537.5L548.8 552.4M547.7 555.0L541.3 570.9M540.1 574.0L536.3 583.3M536.1 584.0L516.7 632.0M502.1 668.0L494.7 686.3M642.4 300.9L630.5 330.4M630.4 330.6L620.5 355.2M619.1 358.6L615.2 368.4M614.2 370.7L606.2 390.6M605.7 391.9L583.4 447.1M582.9 448.4L575.7 466.0M574.6 468.9L557.4 511.4M556.6 513.3L535.4 565.9M534.6 567.9L512.9 621.5M512.2 623.2L493.6 669.4M493.1 670.5L481.9 698.3M633.0 297.1L619.2 331.3M618.8 332.2L596.6 387.3M595.4 390.2L591.5 399.8M579.7 429.0L570.4 452.1M569.0 455.5L550.4 501.6M550.3 501.9L546.3 511.6M545.3 514.1L532.8 545.0M532.4 546.0L521.7 572.5M520.8 574.8L509.3 603.2M492.6 644.7L474.4 689.7M625.7 294.2L606.3 342.2M606.1 342.6L600.7 356.1M600.1 357.5L596.4 366.8M595.6 368.8L583.0 400.0M581.7 403.2L564.9 444.7M564.4 445.9L555.9 467.0M555.0 469.3L546.1 491.2M544.9 494.4L535.1 518.5M534.6 519.8L521.9 551.2M521.3 552.6L511.7 576.4M510.5 579.5L493.7 621.0M493.6 621.3L476.2 664.3M474.9 667.6L459.0 706.8M615.1 289.9L604.7 315.6M604.2 316.8L597.8 332.7M596.9 335.0L588.0 357.0M587.9 357.1L569.7 402.3M568.4 405.4L547.9 456.1M547.6 457.0L526.2 510.0M524.9 513.1L504.2 564.5M503.6 565.8L483.1 616.7M482.9 617.1L478.5 628.1M478.0 629.2L456.5 682.4M568.7 379.0L553.6 416.2M552.9 418.2L545.0 437.7M544.2 439.6L532.3 469.2M532.1 469.5L510.0 524.2M509.3 526.0L499.0 551.5M497.8 554.4L476.5 607.1M475.1 610.6L464.5 636.9M464.0 638.1L442.2 692.2M597.5 282.8L589.3 303.1M588.8 304.5L576.3 335.3M576.0 336.1L565.7 361.5M565.5 362.2L552.2 394.9M530.2 449.4L516.5 483.2M503.0 516.7L490.8 547.0M490.8 547.1L476.0 583.5M454.6 636.6L449.2 650.0M448.3 652.0L439.0 675.3M579.2 309.1L559.4 358.0M558.4 360.6L546.3 390.4M545.6 392.2L539.4 407.6M530.4 429.9L514.9 468.3M514.6 468.9L510.7 478.7M496.0 515.1L485.0 542.2M483.8 545.3L472.0 574.4M461.9 599.4L450.0 628.9M448.7 632.1L436.2 662.9M584.3 277.4L566.6 321.3M565.2 324.8L558.2 341.9M558.2 341.9L550.4 361.3M550.2 361.7L544.4 376.2M544.3 376.3L531.0 409.4M529.8 412.2L513.4 452.9M512.0 456.4L490.1 510.6M488.9 513.5L472.2 554.9M471.0 557.8L466.6 568.8M465.2 572.1L449.3 611.6M448.3 614.0L436.9 642.3M436.3 643.7L426.7 667.4M560.2 300.3L556.0 310.5M555.9 310.9L550.6 323.8M549.6 326.5L542.5 344.0M541.8 345.8L527.8 380.3M527.6 381.0L523.6 390.9M522.1 394.6L514.8 412.5M513.9 414.9L494.0 464.0M483.0 491.2L463.3 540.1M462.0 543.2L450.9 570.8M450.0 573.0L439.6 598.8M564.8 269.5L547.2 312.9M529.7 356.4L511.0 402.7M510.5 403.8L501.5 426.1M500.1 429.4L484.8 467.5M484.1 469.1L477.1 486.5M475.6 490.2L454.9 541.5M453.8 544.1L445.9 563.8M445.8 563.9L441.7 574.0M440.3 577.6L425.7 613.7M425.6 614.0L421.5 624.1M421.3 624.6L411.3 649.4M556.5 266.2L550.4 281.4M549.2 284.3L540.2 306.6M539.8 307.6L523.0 349.2M522.6 350.2L502.7 399.5M501.7 401.9L494.0 421.0M493.4 422.5L481.0 453.0M480.2 455.0L468.6 483.9M467.4 486.7L447.1 537.1M446.6 538.3L428.4 583.3M427.7 585.2L412.4 622.9M551.0 264.0L531.0 313.4M529.8 316.3L512.1 360.2M511.5 361.6L491.6 410.9M491.0 412.4L484.1 429.5M483.8 430.3L474.0 454.4M473.1 456.7L451.4 510.5M450.4 513.0L446.4 522.7M445.6 524.7L427.3 570.0M426.3 572.4L413.0 605.4M540.5 259.7L523.5 301.7M522.0 305.3L500.8 357.9M493.1 376.9L488.9 387.4M487.6 390.5L469.2 436.0M468.6 437.5L460.3 458.1M459.0 461.4L443.4 499.9M436.5 517.0L415.4 569.2M414.9 570.4L410.0 582.5M409.5 583.8L398.5 611.1M397.4 613.8L377.6 662.9M533.2 256.8L524.4 278.4M518.4 293.2L507.0 321.5M505.7 324.8L495.0 351.2M494.8 351.7L474.4 402.2M473.8 403.6L469.8 413.6M469.2 415.0L463.3 429.6M461.8 433.3L452.7 456.0M451.8 458.2L436.5 496.1M435.7 497.9L416.5 545.6M415.4 548.1L401.8 581.9M401.4 582.8L379.9 636.0M523.8 253.0L504.1 301.6M481.3 358.1L464.3 400.3M463.8 401.5L441.7 456.0M441.5 456.6L422.6 503.5M422.5 503.7L402.2 553.9M401.6 555.4L396.0 569.1M374.8 621.7L358.5 662.0M516.8 250.2L507.1 274.1M506.6 275.4L492.2 311.0M491.8 311.9L487.7 322.2M487.3 323.1L468.3 370.1M468.0 370.8L450.9 413.3M449.6 416.5L435.9 450.3M434.9 452.9L412.4 508.4M396.2 548.7L391.3 560.8M390.1 563.8L378.5 592.5M377.6 594.6L373.6 604.4M372.3 607.8L361.1 635.4M505.8 245.7L485.4 296.3M484.4 298.7L480.6 308.1M479.4 311.2L466.7 342.6M447.9 389.2L438.3 412.8M437.6 414.6L433.8 423.9M432.4 427.5L416.6 466.6M415.4 469.4L397.5 513.8M396.0 517.5L389.0 534.8M388.0 537.4L375.1 569.3M357.5 612.9L335.2 668.0M478.2 295.7L459.8 341.4M416.6 448.2L403.4 480.9M402.8 482.3L382.5 532.7M381.0 536.3L366.8 571.6M353.2 605.2L333.4 654.1M491.9 240.1L470.1 294.1M470.0 294.4L455.5 330.2M454.5 332.8L443.1 360.9M442.8 361.7L432.9 386.1M432.6 387.0L428.1 398.2M427.3 400.2L412.1 437.7M411.2 439.9L401.3 464.5M366.3 551.2L360.7 564.8M359.7 567.5L345.9 601.6M475.4 250.3L456.7 296.6M441.7 333.6L428.4 366.6M428.0 367.6L406.7 420.5M406.4 421.0L398.8 439.9M382.3 480.9L361.9 531.2M361.6 532.0L356.1 545.5M355.5 547.1L342.6 579.1M342.2 579.9L333.7 601.0M333.5 601.6L321.5 631.3M475.5 233.5L458.1 276.6M456.8 279.8L441.6 317.5M441.5 317.6L422.0 366.0M420.9 368.8L407.1 402.8M406.8 403.6L389.4 446.7M388.5 448.9L366.7 502.9M366.4 503.5L358.1 524.0M356.9 527.1L338.2 573.3M337.3 575.5L327.0 601.2M326.5 602.4L305.0 655.5M464.7 229.1L456.9 248.6M456.2 250.2L437.0 297.8M436.6 298.9L427.4 321.6M427.0 322.6L413.2 356.6M403.1 381.7L385.3 425.8M384.6 427.6L372.9 456.4M372.9 456.5L366.9 471.4M351.5 509.3L329.3 564.3M328.0 567.5L319.5 588.7M455.9 225.5L447.5 246.2M446.9 247.9L437.1 272.0M436.8 272.8L428.1 294.3M400.4 362.8L395.0 376.4M380.7 411.6L363.9 453.4M345.2 499.5L329.1 539.3M328.0 542.1L321.4 558.3M321.4 558.4L317.1 569.2M316.5 570.5L304.7 599.8" stroke="#dde0e6" stroke-width="0.7" fill="none"/></g><clipPath id="cg7"><path d="M680.0 450.0 L722.0 448.0 L725.0 495.0 L682.0 495.0Z" fill="#000" /></clipPath><g clip-path="url(#cg7)"><path d="M729.4 425.4L738.5 459.1M744.3 480.8L758.2 532.8M723.4 427.0L736.6 476.1M714.3 429.4L719.2 447.4M732.5 497.1L735.6 508.7M702.6 432.6L717.0 486.5M717.9 490.0L725.5 518.1M696.9 434.1L711.5 488.6M712.2 491.4L721.0 523.9M690.0 435.9L696.6 460.8M696.8 461.4L711.6 516.6M680.3 438.5L692.3 483.5M692.4 483.9L704.1 527.7M676.5 439.5L687.7 481.3M688.0 482.5L702.8 537.6M670.2 441.2L675.3 460.6M676.1 463.4L686.0 500.5M686.9 503.6L698.8 548.2M663.4 443.1L676.3 491.2M745.6 487.2L712.5 496.1M709.0 497.0L689.5 502.3M688.0 502.7L637.4 516.2M698.2 491.0L682.2 495.3M680.3 495.8L627.5 509.9M741.6 472.1L719.9 477.9M716.8 478.8L665.4 492.5M739.7 464.9L682.8 480.1M680.2 480.8L635.9 492.7M737.4 456.6L725.2 459.9M724.9 460.0L694.0 468.2M690.4 469.2L668.2 475.2M665.5 475.9L640.6 482.5M734.1 444.2L707.0 451.5M706.4 451.6L681.9 458.2M681.0 458.4L663.7 463.1M732.0 436.4L674.4 451.8M673.2 452.1L651.9 457.9M729.5 427.0L699.4 435.0M697.4 435.5L667.0 443.7" stroke="#dde0e6" stroke-width="0.7" fill="none"/></g><clipPath id="cg2"><path d="M648.0 494.0 L700.0 488.0 L745.0 500.0 L760.0 540.0 L742.0 575.0 L720.0 590.0 L680.0 590.0 L660.0 560.0 L640.0 530.0Z" fill="#000" /></clipPath><g clip-path="url(#cg2)"><path d="M758.3 415.6L762.3 426.5M762.6 427.4L773.3 456.7M797.8 524.0L813.9 568.2M814.8 570.7L832.7 619.9M750.4 418.5L759.7 444.1M760.9 447.5L768.3 467.9M768.3 467.9L775.9 488.8M776.2 489.6L782.5 506.8M782.7 507.4L802.6 561.9M802.6 562.0L821.8 614.7M744.9 420.5L748.6 430.5M749.9 434.0L754.1 445.7M754.5 446.7L768.9 486.4M770.0 489.4L777.1 508.9M791.0 547.1L809.5 597.9M736.9 423.4L744.6 444.8M744.9 445.5L757.3 479.7M762.2 493.1L778.6 538.2M778.9 539.0L797.0 588.8M729.2 426.2L734.5 440.7M735.3 442.9L742.9 463.8M743.3 465.0L758.3 506.1M758.8 507.7L773.7 548.4M794.2 604.9L814.0 659.3M723.6 428.2L742.3 479.5M742.6 480.5L748.2 495.9M749.2 498.6L765.3 542.8M765.9 544.6L782.4 589.9M783.4 592.5L802.5 645.0M717.4 430.5L726.3 454.9M738.3 487.8L751.9 525.3M753.1 528.5L763.2 556.2M764.4 559.7L768.9 572.0M769.0 572.3L781.7 607.0M781.7 607.1L793.6 639.9M709.8 433.3L724.7 474.3M725.2 475.6L736.5 506.9M737.7 510.1L747.3 536.4M747.6 537.2L760.2 571.8M760.3 572.2L772.3 605.1M772.4 605.3L782.6 633.4M735.5 525.8L751.9 570.7M752.3 571.7L770.5 621.8M696.8 438.0L705.3 461.2M731.2 532.4L751.3 587.6M759.0 608.9L776.6 657.0M695.9 455.9L703.5 476.8M716.0 511.3L729.4 548.0M729.4 548.2L741.0 580.0M683.3 442.9L692.2 467.3M693.2 470.2L707.9 510.3M720.6 545.2L731.4 574.9M731.8 576.2L742.0 604.1M743.0 606.8L746.8 617.3M746.9 617.6L752.8 633.7M678.4 444.7L698.3 499.3M699.0 501.3L712.8 539.2M712.9 539.6L729.2 584.2M730.5 587.8L738.3 609.3M738.6 610.1L757.9 663.2M673.6 446.5L687.0 483.2M688.1 486.5L694.3 503.3M695.5 506.6L703.8 529.5M704.8 532.1L716.0 563.0M717.2 566.3L725.0 587.7M738.7 625.4L754.7 669.3M665.7 449.3L684.2 500.1M684.2 500.2L697.0 535.3M697.8 537.6L709.3 569.0M710.3 571.7L717.9 592.8M718.2 593.5L722.6 605.6M723.5 608.2L733.7 636.2M691.0 537.6L709.7 589.0M710.8 591.9L716.1 606.5M716.2 606.8L719.7 616.4M720.2 617.7L729.8 644.2M671.6 512.2L691.3 566.3M691.9 567.9L700.5 591.5M701.2 593.6L719.3 643.3M646.4 456.3L657.5 486.6M658.2 488.7L672.2 527.0M673.4 530.3L685.7 564.1M687.0 567.7L697.3 596.0M698.0 597.9L713.4 640.3M640.6 458.5L653.6 494.0M654.6 497.0L660.8 513.9M661.0 514.5L667.8 533.2M668.7 535.6L684.6 579.4M703.8 631.9L714.8 662.4M656.8 525.8L673.4 571.6M673.8 572.7L682.0 595.1M683.2 598.6L699.4 643.0M626.5 463.6L633.8 483.7M634.6 485.8L642.6 507.9M643.3 509.7L662.0 561.3M662.8 563.4L677.3 603.2M685.8 626.8L697.1 657.7M619.8 466.0L634.9 507.3M651.4 552.6L660.3 577.1M661.6 580.6L681.3 635.0M681.9 636.5L687.4 651.6M610.9 469.3L629.8 521.2M630.7 523.5L645.0 562.9M646.2 566.0L651.1 579.7M651.3 580.1L670.3 632.3M604.6 471.6L624.2 525.2M624.8 527.1L642.0 574.1M643.1 577.3L651.8 601.1M653.0 604.4L656.5 614.1M668.9 648.1L676.2 668.2M598.9 473.6L614.5 516.5M614.6 516.8L632.7 566.7M633.6 569.0L651.1 617.2M651.2 617.3L664.0 652.5M664.2 653.2L671.2 672.3M603.0 506.6L612.1 531.5M612.8 533.5L627.7 574.3M628.3 575.9L638.2 603.3M638.3 603.5L654.5 648.0M655.1 649.6L662.3 669.6M585.2 478.6L603.5 528.9M603.8 529.9L607.4 539.8M608.6 543.1L618.6 570.4M619.1 571.7L628.2 596.9M628.6 598.0L640.1 629.5M640.2 629.7L645.5 644.3M579.4 480.7L596.2 527.1M597.0 529.1L602.9 545.5M603.9 548.2L612.5 571.8M612.8 572.6L618.1 587.1M618.8 589.2L628.9 616.8M630.2 620.4L645.6 662.7M822.6 595.3L769.9 614.5M767.3 615.4L712.5 635.4M712.0 635.5L680.5 647.0M678.3 647.8L661.5 653.9M658.9 654.9L636.7 663.0M786.5 599.1L775.1 603.2M772.5 604.2L758.7 609.2M756.9 609.9L731.2 619.2M728.1 620.4L693.3 633.0M691.6 633.7L655.0 647.0M652.3 648.0L623.7 658.4M817.0 579.7L799.0 586.2M770.3 596.7L747.9 604.8M746.2 605.5L734.3 609.8M732.4 610.5L676.5 630.8M675.6 631.2L620.0 651.4M814.5 572.8L797.8 578.9M794.4 580.1L778.2 586.0M777.7 586.2L753.7 594.9M752.3 595.4L729.6 603.7M725.9 605.0L707.5 611.7M705.2 612.6L649.5 632.9M647.0 633.8L618.6 644.1M810.4 561.6L782.8 571.6M780.6 572.4L760.4 579.8M711.5 597.6L674.3 611.1M674.1 611.2L632.7 626.2M631.1 626.8L601.2 637.7M808.1 555.2L754.7 574.6M752.5 575.4L734.8 581.8M734.6 581.9L718.5 587.8M718.4 587.8L689.5 598.3M687.3 599.1L673.1 604.3M772.5 555.7L721.3 574.3M718.7 575.3L677.8 590.1M674.5 591.4L654.3 598.7M629.0 607.9L597.0 619.5M800.7 535.1L765.4 547.9M761.7 549.3L739.8 557.2M640.8 593.3L630.7 597.0M629.3 597.5L613.5 603.2M764.9 542.0L738.0 551.8M736.0 552.5L701.3 565.1M677.9 573.6L645.0 585.6M643.3 586.2L593.4 604.4M749.3 535.9L705.5 551.9M705.3 551.9L663.5 567.2M660.2 568.4L635.5 577.3M620.4 582.8L609.1 586.9M792.7 513.1L759.8 525.1M759.0 525.3L702.8 545.8M702.4 546.0L680.4 554.0M677.1 555.2L660.4 561.2M658.0 562.1L632.7 571.3M630.9 572.0L612.9 578.5M789.7 504.7L764.0 514.0M760.3 515.4L722.4 529.2M721.2 529.6L690.2 540.9M632.3 561.9L589.2 577.6M785.3 492.6L767.8 499.0M764.0 500.3L727.7 513.5M724.6 514.7L677.4 531.9M646.9 543.0L627.3 550.1M624.3 551.2L573.8 569.6M783.7 488.4L754.1 499.2M752.7 499.7L735.3 506.0M712.4 514.4L686.7 523.7M685.3 524.2L663.0 532.4M662.5 532.5L625.4 546.0M624.7 546.3L570.3 566.1M779.5 476.9L735.5 492.9M733.7 493.5L704.4 504.2M666.6 518.0L634.5 529.7M631.5 530.7L606.8 539.7M603.8 540.8L565.4 554.8M777.2 470.3L737.3 484.8M698.4 499.0L688.0 502.8M686.3 503.4L644.8 518.5M641.9 519.5L592.5 537.5M774.6 463.3L753.0 471.1M750.0 472.2L695.8 491.9M693.7 492.7L639.0 512.6M603.6 525.5L571.5 537.2M770.9 453.1L723.6 470.3M722.9 470.6L686.9 483.7M686.3 483.9L641.5 500.2M639.6 500.9L586.2 520.4M768.4 446.4L734.3 458.8M732.5 459.4L700.5 471.1M698.2 471.9L672.4 481.3M671.5 481.6L619.2 500.7M616.1 501.8L582.2 514.1M765.0 436.8L730.7 449.3M633.1 484.8L604.2 495.3M601.2 496.4L588.8 500.9M588.5 501.0L552.6 514.1M735.9 438.7L709.0 448.5M708.2 448.7L688.2 456.0M685.9 456.9L666.8 463.8M666.5 463.9L644.5 471.9M642.3 472.7L619.0 481.2M616.1 482.3L593.5 490.5M590.7 491.5L537.8 510.8M730.1 428.3L703.8 437.9M701.8 438.6L650.0 457.4M650.0 457.5L599.2 475.9M598.4 476.2L566.5 487.8" stroke="#dde0e6" stroke-width="0.7" fill="none"/></g><path d="M690.0 262.0 C691.7 263.3 696.3 269.0 700.0 270.0 C703.7 271.0 707.8 267.2 712.0 268.0 C716.2 268.8 720.3 272.7 725.0 275.0 C729.7 277.3 737.5 280.8 740.0 282.0" stroke="#d6d9de" stroke-width="0.8" fill="none" stroke-linejoin="round" stroke-linecap="round" /><path d="M695.0 285.0 C697.2 284.2 703.5 279.2 708.0 280.0 C712.5 280.8 717.5 287.5 722.0 290.0 C726.5 292.5 732.8 294.2 735.0 295.0" stroke="#d6d9de" stroke-width="0.8" fill="none" stroke-linejoin="round" stroke-linecap="round" /><path d="M700.0 250.0 C701.3 252.0 707.0 256.2 708.0 262.0 C709.0 267.8 705.3 278.7 706.0 285.0 C706.7 291.3 711.0 297.5 712.0 300.0" stroke="#d6d9de" stroke-width="0.8" fill="none" stroke-linejoin="round" stroke-linecap="round" /><path d="M680.0 290.0 C682.3 291.0 690.7 292.7 694.0 296.0 C697.3 299.3 699.0 307.7 700.0 310.0" stroke="#d6d9de" stroke-width="0.8" fill="none" stroke-linejoin="round" stroke-linecap="round" /><path d="M722.0 262.0 C723.3 260.0 726.2 252.8 730.0 250.0 C733.8 247.2 742.5 245.8 745.0 245.0" stroke="#d6d9de" stroke-width="0.8" fill="none" stroke-linejoin="round" stroke-linecap="round" /><path d="M730.0 275.0 C732.5 273.8 740.3 268.5 745.0 268.0 C749.7 267.5 755.8 271.3 758.0 272.0" stroke="#d6d9de" stroke-width="0.8" fill="none" stroke-linejoin="round" stroke-linecap="round" /><path d="M686.0 300.0 C683.7 302.0 676.3 309.0 672.0 312.0 C667.7 315.0 662.0 317.0 660.0 318.0" stroke="#d6d9de" stroke-width="0.8" fill="none" stroke-linejoin="round" stroke-linecap="round" /><path d="M715.0 300.0 C716.7 302.5 724.2 310.0 725.0 315.0 C725.8 320.0 720.8 327.5 720.0 330.0" stroke="#d6d9de" stroke-width="0.8" fill="none" stroke-linejoin="round" stroke-linecap="round" /><path d="M740.0 290.0 C743.3 291.7 754.2 299.0 760.0 300.0 C765.8 301.0 772.5 296.7 775.0 296.0" stroke="#d6d9de" stroke-width="0.8" fill="none" stroke-linejoin="round" stroke-linecap="round" /><clipPath id="cg4"><path d="M441.0 600.0 L490.0 585.0 L502.0 575.0 L470.0 560.0 L441.0 560.0Z" fill="#000" /></clipPath><g clip-path="url(#cg4)"><path d="M510.2 523.6L520.3 580.9M520.6 582.6L524.3 603.8M524.8 606.3L533.8 657.2M502.5 525.0L506.2 546.2M506.4 547.3L511.2 574.2M511.8 578.0L513.9 589.8M514.4 592.2L520.5 627.0M495.5 526.2L501.9 563.0M502.1 563.6L509.9 607.8M486.8 527.8L496.9 585.4M497.5 588.6L504.0 625.6M480.2 528.9L482.5 542.2M483.0 544.9L492.9 600.9M493.1 602.4L499.8 640.5M472.3 530.3L477.8 561.4M478.1 563.2L483.5 593.7M484.0 596.4L487.9 618.5M488.4 621.8L496.9 670.0M463.9 531.8L472.9 582.9M473.1 584.3L481.5 631.8M457.5 532.9L465.7 579.0M466.0 580.7L472.3 616.4M473.0 620.3L482.2 672.9M447.9 534.6L455.0 575.2M455.6 578.8L460.1 604.0M460.8 607.8L464.3 628.1M438.1 536.3L443.7 568.1M447.2 587.9L456.9 642.8M440.0 590.0L447.7 633.4M424.4 538.8L426.8 552.5M427.1 554.2L432.3 583.8M432.7 585.7L438.8 620.5M439.0 621.4L443.6 647.7M418.8 563.9L424.4 595.9M430.8 632.3L436.4 663.8M528.0 619.3L484.2 627.1M480.5 627.7L423.8 637.7M526.4 610.3L513.9 612.5M512.1 612.8L486.2 617.4M484.8 617.7L430.8 627.2M525.3 604.0L508.6 606.9M505.9 607.4L483.2 611.4M480.4 611.9L428.3 621.1M524.0 597.0L469.4 606.6M466.2 607.2L429.8 613.6M427.9 613.9L399.1 619.0M522.7 589.5L485.7 596.0M485.1 596.1L448.5 602.6M445.3 603.1L387.0 613.4M521.1 580.6L481.5 587.5M478.0 588.2L443.1 594.3M441.4 594.6L390.0 603.7M519.5 571.1L484.8 577.2M483.9 577.4L457.0 582.2M454.5 582.6L420.1 588.7M518.6 566.1L490.2 571.1M490.1 571.1L433.8 581.1M432.0 581.4L407.8 585.7M501.3 558.8L448.5 568.1M448.0 568.2L407.4 575.4M515.6 548.9L467.0 557.4M448.1 560.8L431.6 563.7M427.8 564.3L378.2 573.1M513.9 539.4L503.9 541.1M502.2 541.4L474.7 546.3M472.1 546.7L419.2 556.1M513.0 534.4L487.1 539.0M486.4 539.1L427.8 549.4M427.8 549.4L386.7 556.7M511.1 523.5L484.5 528.2M442.6 535.6L405.5 542.2" stroke="#dde0e6" stroke-width="0.7" fill="none"/></g><clipPath id="cg5"><path d="M441.0 540.0 L520.0 540.0 L540.0 555.0 L515.0 575.0 L470.0 575.0 L441.0 578.0Z" fill="#000" /></clipPath><g clip-path="url(#cg5)"><path d="M515.3 485.7L531.9 490.2M535.4 491.1L566.4 499.4M568.2 499.9L584.3 504.2M586.6 504.8L596.7 507.5M431.8 472.2L458.9 479.5M461.3 480.2L479.1 484.9M479.8 485.1L508.8 492.9M512.5 493.9L568.1 508.8M568.3 508.8L598.5 516.9M429.9 479.2L472.3 490.6M474.6 491.2L487.0 494.5M490.6 495.5L532.5 506.7M536.2 507.7L590.1 522.1M427.5 488.0L462.3 497.3M462.3 497.3L488.0 504.2M491.4 505.1L539.2 517.9M541.7 518.6L593.8 532.5M425.2 496.7L453.6 504.3M454.0 504.4L478.4 510.9M480.1 511.4L507.7 518.8M511.6 519.8L532.3 525.4M535.5 526.2L562.7 533.5M564.9 534.1L591.1 541.1M423.1 504.6L457.5 513.8M457.9 513.9L470.7 517.3M471.7 517.6L526.5 532.3M528.6 532.9L542.0 536.5M542.1 536.5L579.9 546.6M522.9 540.8L550.2 548.1M553.5 549.0L592.2 559.4M417.7 524.9L458.4 535.8M459.3 536.0L511.5 550.0M416.3 529.9L443.0 537.0M445.4 537.7L488.5 549.2M490.0 549.6L502.8 553.0M506.3 554.0L551.6 566.1M553.8 566.7L582.6 574.4M413.8 539.3L424.1 542.0M425.4 542.4L454.8 550.2M495.0 561.0L520.2 567.8M522.9 568.5L539.8 573.0M543.5 574.0L588.4 586.0M411.9 546.4L448.5 556.2M449.2 556.4L477.8 564.0M480.4 564.8L494.8 568.6M495.2 568.7L552.9 584.2M555.0 584.7L565.6 587.6M409.5 555.1L461.8 569.1M461.9 569.2L493.2 577.5M494.8 578.0L541.8 590.6M545.0 591.4L578.2 600.3M453.8 577.2L474.6 582.7M488.2 586.4L533.8 598.6M535.6 599.1L570.4 608.4M403.5 577.6L428.6 584.3M452.5 590.7L492.5 601.4M493.5 601.7L514.2 607.2M401.4 585.4L431.6 593.5M433.3 593.9L460.4 601.2M462.6 601.8L487.5 608.4M488.9 608.8L507.6 613.8M509.7 614.4L554.9 626.5M399.9 591.0L429.8 599.0M432.8 599.8L486.8 614.3M488.7 614.8L513.7 621.5M516.6 622.3L550.4 631.3M550.7 631.4L570.9 636.8M397.5 600.0L431.6 609.1M432.1 609.2L455.8 615.6M457.2 616.0L488.6 624.4M491.0 625.0L530.4 635.6M533.9 636.5L574.6 647.4M395.0 609.5L430.3 619.0M470.9 629.8L492.2 635.6M495.3 636.4L537.4 647.7M586.7 502.8L577.6 537.0M564.5 585.7L553.6 626.6M547.7 648.6L542.0 669.7M580.9 501.2L573.6 528.8M572.7 531.9L558.0 587.0M557.6 588.3L550.9 613.6M550.3 615.7L542.8 643.7M542.3 645.4L531.2 686.9M572.1 498.9L560.7 541.2M560.1 543.6L556.1 558.5M555.6 560.2L546.6 593.7M545.7 597.1L539.6 619.9M538.9 622.7L533.6 642.4M532.9 645.2L522.9 682.4M560.7 516.8L550.1 556.1M550.0 556.6L536.9 605.5M536.6 606.7L532.8 620.9M532.5 621.9L520.0 668.4M558.3 495.2L551.4 521.0M550.7 523.4L538.0 570.9M537.4 573.0L522.8 627.6M522.0 630.4L510.2 674.5M547.5 492.3L538.9 524.4M538.7 524.8L525.0 576.0M524.5 578.0L516.5 607.8M511.9 624.9L504.0 654.6M538.9 490.0L523.7 546.9M522.7 550.5L512.2 589.9M511.3 593.0L508.3 604.5M507.4 607.9L503.7 621.6M502.6 625.4L487.8 680.7M527.4 518.8L520.5 544.4M519.9 546.7L504.5 604.0M503.7 607.2L500.2 620.0M499.2 623.8L484.2 680.0M526.8 486.7L512.1 541.5M511.8 542.5L505.2 567.3M504.3 570.4L495.1 605.0M494.6 606.8L481.3 656.3M518.5 484.5L510.6 514.1M497.1 564.5L486.8 603.0M478.7 633.2L475.1 646.5M508.8 481.9L503.2 502.9M502.3 506.3L499.5 516.7M498.8 519.4L491.2 547.8M490.7 549.4L481.7 583.2M480.9 586.1L476.9 601.2M475.8 605.0L460.9 660.9M503.9 480.6L488.5 538.1M479.7 571.0L470.2 606.1M494.1 478.0L486.2 507.4M486.0 508.4L480.0 530.8M479.9 531.0L477.3 540.7M476.3 544.4L464.6 588.2M464.5 588.7L461.1 601.3M460.3 604.2L451.8 636.0M479.9 497.4L473.5 521.5M473.5 521.5L466.4 548.1M465.4 551.7L453.3 596.7M452.6 599.5L448.4 615.2M480.3 474.3L472.0 505.2M471.3 507.9L462.6 540.4M462.3 541.5L452.5 578.1M452.3 578.7L447.3 597.6M447.2 597.7L437.8 632.8M469.6 471.4L463.0 495.7M451.5 538.8L447.8 552.5M447.7 552.9L440.3 580.5M439.5 583.4L425.8 634.6M464.1 469.9L458.7 489.9M458.4 491.3L454.3 506.7M454.0 507.7L438.9 563.9M438.1 566.9L432.1 589.2M454.6 482.4L439.9 537.3M431.4 569.0L424.0 596.5M446.8 465.3L438.4 496.6M437.8 499.0L433.6 514.6M432.9 517.3L424.9 547.1M416.2 579.5L410.5 600.7M409.8 603.5L396.2 654.3M442.8 464.2L436.2 488.8M436.0 489.6L431.7 505.5M431.5 506.3L419.1 552.6M418.9 553.2L413.8 572.2M413.7 572.5L408.4 592.5M407.9 594.2L393.9 646.5" stroke="#dde0e6" stroke-width="0.7" fill="none"/></g><clipPath id="cg6"><path d="M595.0 410.0 L645.0 400.0 L660.0 430.0 L640.0 445.0 L600.0 440.0Z" fill="#000" /></clipPath><g clip-path="url(#cg6)"><path d="M614.0 351.1L638.9 368.5M639.5 368.9L686.0 401.5M686.8 402.0L709.8 418.2M610.3 356.5L635.0 373.8M636.6 374.9L669.6 398.1M671.5 399.4L707.1 424.3M636.1 388.6L644.3 394.4M658.5 404.3L673.7 415.0M674.9 415.8L687.9 424.9M687.9 424.9L734.1 457.2M596.4 376.3L627.6 398.2M630.0 399.8L659.8 420.7M662.3 422.5L674.3 430.8M674.8 431.2L703.9 451.6M592.3 382.1L628.6 407.5M629.0 407.8L661.8 430.8M664.2 432.5L698.5 456.5M587.7 388.7L633.1 420.5M635.0 421.8L658.0 437.9M659.0 438.6L679.3 452.8M581.1 398.0L610.2 418.4M625.9 429.4L644.7 442.5M645.7 443.2L657.4 451.5M657.6 451.6L677.5 465.5M575.0 406.8L606.2 428.6M633.3 447.6L665.8 470.4M564.2 422.2L600.3 447.5M622.1 462.7L657.0 487.2M557.3 432.1L606.0 466.2M608.4 467.9L657.2 502.1M699.7 409.5L681.5 435.4M672.0 449.1L642.0 491.9M641.2 493.0L634.3 502.8M636.3 484.6L607.1 526.2M685.8 399.8L674.3 416.2M673.4 417.4L654.1 445.1M653.1 446.4L639.8 465.4M637.7 468.4L618.9 495.3M676.1 393.0L658.8 417.7M657.6 419.4L634.8 452.0M633.8 453.4L606.7 492.1M665.8 385.9L641.4 420.8M641.1 421.1L616.0 457.0M648.6 392.8L636.4 410.2M651.5 375.8L623.0 416.5M622.2 417.7L604.9 442.4M604.0 443.6L591.0 462.2M641.9 369.1L632.9 381.9M631.1 384.5L607.3 418.5M605.8 420.6L598.3 431.3M596.2 434.3L575.6 463.7M635.8 364.8L602.3 412.6M601.7 413.4L574.3 452.5M628.0 359.4L617.6 374.2M616.6 375.6L584.6 421.3M583.2 423.2L553.0 466.4M590.2 388.1L578.5 404.9M576.8 407.3L551.2 443.8" stroke="#dde0e6" stroke-width="0.7" fill="none"/></g><rect x="661.4" y="490.6" width="4.0" height="2.0" fill="#d3ecd9" transform="rotate(-18 661.4 490.6)"/><rect x="643.7" y="346.8" width="3.7" height="2.2" fill="#d3ecd9" transform="rotate(-6 643.7 346.8)"/><rect x="688.8" y="356.7" width="4.9" height="3.3" fill="#d3ecd9" transform="rotate(-27 688.8 356.7)"/><rect x="490.7" y="410.9" width="2.7" height="2.5" fill="#d3ecd9" transform="rotate(18 490.7 410.9)"/><rect x="685.5" y="481.2" width="3.8" height="3.0" fill="#d3ecd9" transform="rotate(-11 685.5 481.2)"/><rect x="579.2" y="416.1" width="4.0" height="2.6" fill="#d3ecd9" transform="rotate(3 579.2 416.1)"/><rect x="582.5" y="491.8" width="3.6" height="2.4" fill="#d3ecd9" transform="rotate(-6 582.5 491.8)"/><rect x="571.7" y="352.4" width="4.6" height="3.1" fill="#d3ecd9" transform="rotate(-17 571.7 352.4)"/><rect x="665.6" y="507.1" width="5.4" height="2.6" fill="#d3ecd9" transform="rotate(27 665.6 507.1)"/><rect x="504.3" y="473.3" width="4.1" height="2.3" fill="#d3ecd9" transform="rotate(-1 504.3 473.3)"/><rect x="677.6" y="344.8" width="5.0" height="1.9" fill="#d3ecd9" transform="rotate(2 677.6 344.8)"/><rect x="615.4" y="469.1" width="5.3" height="3.5" fill="#d3ecd9" transform="rotate(-29 615.4 469.1)"/><rect x="500.4" y="523.4" width="4.8" height="2.8" fill="#d3ecd9" transform="rotate(-27 500.4 523.4)"/><rect x="486.0" y="419.7" width="4.1" height="3.3" fill="#d3ecd9" transform="rotate(-15 486.0 419.7)"/><rect x="601.7" y="500.7" width="3.5" height="3.6" fill="#d3ecd9" transform="rotate(-16 601.7 500.7)"/><rect x="633.6" y="398.9" width="5.1" height="2.6" fill="#d3ecd9" transform="rotate(-10 633.6 398.9)"/><rect x="648.5" y="433.9" width="5.1" height="2.7" fill="#d3ecd9" transform="rotate(-26 648.5 433.9)"/><rect x="516.3" y="395.4" width="2.5" height="1.5" fill="#d3ecd9" transform="rotate(5 516.3 395.4)"/><rect x="565.4" y="512.2" width="3.5" height="1.6" fill="#d3ecd9" transform="rotate(22 565.4 512.2)"/><rect x="548.2" y="404.4" width="5.7" height="1.7" fill="#d3ecd9" transform="rotate(3 548.2 404.4)"/><rect x="470.3" y="415.5" width="5.7" height="3.7" fill="#d3ecd9" transform="rotate(0 470.3 415.5)"/><rect x="461.0" y="468.3" width="5.6" height="3.6" fill="#d3ecd9" transform="rotate(-26 461.0 468.3)"/><rect x="505.7" y="462.0" width="2.2" height="2.4" fill="#d3ecd9" transform="rotate(4 505.7 462.0)"/><rect x="506.6" y="530.3" width="5.8" height="2.2" fill="#d3ecd9" transform="rotate(1 506.6 530.3)"/><rect x="619.3" y="381.1" width="4.1" height="2.9" fill="#d3ecd9" transform="rotate(20 619.3 381.1)"/><rect x="619.5" y="374.2" width="5.0" height="2.7" fill="#d3ecd9" transform="rotate(3 619.5 374.2)"/><rect x="561.7" y="485.1" width="3.7" height="2.6" fill="#d3ecd9" transform="rotate(22 561.7 485.1)"/><rect x="491.6" y="431.7" width="3.5" height="1.5" fill="#d3ecd9" transform="rotate(-24 491.6 431.7)"/><rect x="581.2" y="401.7" width="2.2" height="2.2" fill="#d3ecd9" transform="rotate(27 581.2 401.7)"/><rect x="516.5" y="551.1" width="4.4" height="1.7" fill="#d3ecd9" transform="rotate(25 516.5 551.1)"/><rect x="661.9" y="494.5" width="2.4" height="2.5" fill="#d3ecd9" transform="rotate(-4 661.9 494.5)"/><rect x="495.1" y="495.4" width="5.4" height="3.2" fill="#d3ecd9" transform="rotate(-18 495.1 495.4)"/><rect x="684.4" y="494.5" width="2.6" height="3.6" fill="#d3ecd9" transform="rotate(26 684.4 494.5)"/><rect x="647.6" y="585.9" width="4.1" height="1.6" fill="#d3ecd9" transform="rotate(25 647.6 585.9)"/><rect x="687.8" y="506.6" width="2.4" height="3.7" fill="#d3ecd9" transform="rotate(-25 687.8 506.6)"/><rect x="544.2" y="446.1" width="2.7" height="2.3" fill="#d3ecd9" transform="rotate(13 544.2 446.1)"/><rect x="478.4" y="509.1" width="2.8" height="1.9" fill="#d3ecd9" transform="rotate(26 478.4 509.1)"/><rect x="595.0" y="469.4" width="4.3" height="3.9" fill="#d3ecd9" transform="rotate(-13 595.0 469.4)"/><rect x="492.7" y="493.5" width="3.2" height="3.9" fill="#d3ecd9" transform="rotate(-27 492.7 493.5)"/><rect x="489.2" y="523.9" width="2.4" height="3.1" fill="#d3ecd9" transform="rotate(-9 489.2 523.9)"/><rect x="602.7" y="500.4" width="4.8" height="3.8" fill="#d3ecd9" transform="rotate(-20 602.7 500.4)"/><rect x="455.3" y="417.1" width="2.2" height="2.4" fill="#d3ecd9" transform="rotate(29 455.3 417.1)"/><rect x="495.6" y="434.0" width="2.1" height="3.3" fill="#d3ecd9" transform="rotate(-5 495.6 434.0)"/><rect x="509.4" y="496.6" width="3.0" height="3.8" fill="#d3ecd9" transform="rotate(29 509.4 496.6)"/><rect x="539.6" y="418.2" width="2.8" height="2.3" fill="#d3ecd9" transform="rotate(-17 539.6 418.2)"/><rect x="526.1" y="517.0" width="2.9" height="2.9" fill="#d3ecd9" transform="rotate(21 526.1 517.0)"/><rect x="567.5" y="364.5" width="3.0" height="1.8" fill="#d3ecd9" transform="rotate(-13 567.5 364.5)"/><rect x="620.8" y="513.9" width="3.8" height="1.6" fill="#d3ecd9" transform="rotate(4 620.8 513.9)"/><rect x="677.1" y="452.1" width="4.2" height="2.9" fill="#d3ecd9" transform="rotate(-2 677.1 452.1)"/><rect x="676.8" y="357.4" width="3.7" height="3.8" fill="#d3ecd9" transform="rotate(-24 676.8 357.4)"/><rect x="671.6" y="479.4" width="3.8" height="3.8" fill="#d3ecd9" transform="rotate(28 671.6 479.4)"/><rect x="476.5" y="397.5" width="2.2" height="2.4" fill="#d3ecd9" transform="rotate(3 476.5 397.5)"/><rect x="527.6" y="502.5" width="2.1" height="1.6" fill="#d3ecd9" transform="rotate(-3 527.6 502.5)"/><rect x="518.6" y="443.8" width="4.6" height="2.9" fill="#d3ecd9" transform="rotate(-27 518.6 443.8)"/><rect x="649.5" y="452.4" width="5.1" height="2.9" fill="#d3ecd9" transform="rotate(-25 649.5 452.4)"/><rect x="460.5" y="529.7" width="4.1" height="3.1" fill="#d3ecd9" transform="rotate(-7 460.5 529.7)"/><path d="M487.8 182.0 L489.8 184.7 L491.8 187.3 L493.6 190.0 L495.7 192.6 L497.3 195.6 L500.1 197.4 L501.9 200.7 L505.3 201.8 L507.8 204.2 L510.7 206.1 L513.6 207.9 L516.6 210.7 L516.9 213.9 L516.2 217.1 L517.1 220.3 L516.3 223.6 L516.7 226.8 L516.3 230.0 L517.7 233.1 L517.8 236.4 L517.3 239.7 L518.1 242.9 L519.1 246.0 L520.0 249.1 L521.1 252.1 L523.6 254.7 L523.8 258.1 L524.6 261.4 L526.2 264.0 L528.7 265.8 L530.9 267.9 L533.2 270.0 L534.9 272.5 L537.0 274.7 L538.5 277.5 L538.7 281.2 L537.2 284.6 L538.0 288.6 L535.7 290.9 L534.6 293.9 L533.1 296.6 L531.6 299.4 L529.7 301.9 L527.5 304.3 L526.3 307.3 L524.8 310.0 L523.2 312.7 L521.1 315.0 L518.4 316.8 L517.6 320.1 L514.8 321.8 L512.3 324.3 L510.3 327.3 L508.0 330.0" stroke="#86c5e6" stroke-width="0.8" fill="none" stroke-linejoin="round" stroke-linecap="round" /><path d="M517.6 182.0 L519.6 184.3 L521.6 186.7 L522.7 189.6 L524.6 192.1 L527.1 194.0 L528.7 196.6 L529.8 199.6 L532.7 201.1 L533.3 204.5 L535.5 206.6 L537.9 208.5 L538.6 211.7 L541.3 213.5 L542.7 216.2 L544.7 218.5 L547.0 220.5 L548.5 223.1 L550.6 225.7 L551.6 229.0 L553.0 231.9 L556.3 234.1 L556.5 237.3 L556.6 240.5 L556.9 243.7 L557.6 246.8 L558.0 250.0" stroke="#86c5e6" stroke-width="0.8" fill="none" stroke-linejoin="round" stroke-linecap="round" /><path d="M466.2 198.0 L466.2 201.7 L465.9 205.3 L467.7 209.1 L466.8 212.1 L465.5 215.1 L464.5 218.1 L463.5 221.1 L463.2 224.3 L461.8 227.2 L460.8 230.7 L461.8 233.8 L463.4 236.6 L463.1 240.0 L464.6 242.9 L465.0 246.1 L465.7 249.2 L467.8 251.9 L467.3 255.6 L468.8 258.6 L470.2 261.6 L471.4 264.7 L473.1 267.6 L473.9 270.8 L475.4 273.8 L477.5 276.4 L479.4 279.2 L481.4 281.9 L483.3 284.7" stroke="#86c5e6" stroke-width="0.8" fill="none" stroke-linejoin="round" stroke-linecap="round" /><path d="M441.0 203.5 L441.8 206.6 L443.6 209.2 L445.4 211.8 L445.6 215.1 L447.0 217.9 L447.9 221.0 L449.6 223.6 L452.0 226.0 L453.0 228.9 L452.9 232.4 L454.7 235.1 L456.3 237.7 L457.0 240.9 L459.7 243.1 L459.9 246.6 L462.3 248.9 L464.1 251.6 L464.2 255.1 L465.6 257.9 L468.4 260.1 L468.7 263.5 L469.7 266.5 L471.2 269.3 L473.2 271.9 L474.1 274.9 L475.6 277.8 L477.8 280.3 L479.0 283.5 L481.8 285.6 L483.5 288.5 L485.0 291.5 L486.0 294.7 L488.9 296.8 L490.3 299.8 L491.9 302.5 L493.1 305.5 L495.6 307.5 L496.8 310.5 L500.0 312.1 L501.4 314.9 L503.7 317.1 L505.0 320.0" stroke="#86c5e6" stroke-width="0.8" fill="none" stroke-linejoin="round" stroke-linecap="round" /><path d="M478.8 221.5 L480.0 224.7 L479.3 228.3 L480.9 231.4 L481.3 234.8 L481.8 238.1 L483.2 241.5 L481.1 244.5 L481.3 247.9 L480.3 251.0 L481.3 254.5 L479.9 257.6 L479.2 260.8 L478.8 264.1 L479.0 267.4 L477.8 270.6 L477.9 273.9" stroke="#86c5e6" stroke-width="0.8" fill="none" stroke-linejoin="round" stroke-linecap="round" /><path d="M441.0 248.6 L443.4 251.0 L446.4 252.5 L449.2 254.4 L452.6 255.3 L455.0 257.7 L457.7 259.7 L461.0 260.7 L463.2 263.3 L466.2 264.9 L467.6 268.1 L470.2 270.1 L472.9 272.1 L474.7 274.8 L476.3 277.8 L479.1 279.7 L481.1 282.3 L483.3 284.6 L486.5 285.8 L488.8 288.3 L491.5 290.0 L493.9 292.3 L497.1 293.3 L500.3 295.0 L500.9 298.7 L502.9 301.5 L505.7 303.7 L507.3 306.8 L508.2 310.3 L510.8 312.3 L512.7 314.8 L514.2 317.6 L515.6 320.4 L517.9 322.7 L520.0 325.0" stroke="#86c5e6" stroke-width="0.8" fill="none" stroke-linejoin="round" stroke-linecap="round" /><path d="M501.4 261.2 L503.7 263.6 L504.6 266.8 L505.3 270.1 L507.4 272.6 L509.0 275.4 L510.4 278.3 L511.8 281.2 L514.5 283.5 L514.8 287.2 L517.4 289.5 L518.6 292.7 L520.5 295.5 L522.4 298.2 L523.8 301.3 L524.8 304.5 L524.8 307.7 L525.9 310.7 L526.3 313.8 L525.9 317.0 L527.0 320.0" stroke="#86c5e6" stroke-width="0.8" fill="none" stroke-linejoin="round" stroke-linecap="round" /><path d="M546.5 185.4 L547.7 188.3 L549.0 191.2 L550.5 193.9 L552.5 196.5 L552.8 199.8 L555.2 202.1 L556.8 204.8 L557.0 208.2 L559.2 210.7 L560.5 213.8 L562.7 216.4 L565.0 218.9 L566.5 221.9 L568.4 224.7 L570.1 227.6 L571.9 230.4 L574.9 231.9 L577.3 234.2 L579.3 237.0 L582.1 238.8 L584.9 240.5 L586.9 243.3 L590.1 244.6 L592.1 247.4 L594.7 249.3 L597.8 250.5 L600.7 252.1 L602.9 254.6 L605.8 255.9 L608.4 257.8 L609.4 260.8 L610.7 263.6 L612.6 266.0 L614.3 268.5 L616.8 270.5 L617.7 273.6 L619.6 276.0 L622.2 278.4 L623.6 281.7 L626.1 284.2 L628.4 286.8 L630.0 290.0" stroke="#86c5e6" stroke-width="0.8" fill="none" stroke-linejoin="round" stroke-linecap="round" /><path d="M577.2 201.7 L578.3 204.6 L579.3 207.6 L580.6 210.4 L581.9 213.2 L582.9 216.2 L584.5 218.9 L585.4 221.6 L586.8 224.6 L587.6 227.6 L588.0 230.8 L588.5 233.9 L589.0 237.0 L589.3 240.1 L589.8 243.2" stroke="#86c5e6" stroke-width="0.8" fill="none" stroke-linejoin="round" stroke-linecap="round" /><path d="M586.2 273.9 L589.6 274.1 L592.5 275.8 L595.6 276.8 L598.8 277.2 L601.9 277.6 L604.7 279.4 L607.8 279.5 L610.8 280.0 L613.9 280.4 L617.1 279.7 L620.1 280.7 L622.7 282.6 L625.5 283.9 L628.7 284.1 L631.3 286.0 L634.0 287.5 L637.0 288.3" stroke="#86c5e6" stroke-width="0.8" fill="none" stroke-linejoin="round" stroke-linecap="round" /><path d="M620.8 182.0 L622.7 184.5 L625.9 185.5 L627.4 188.5 L630.0 190.2 L631.8 192.8 L635.2 193.6 L636.7 196.4 L638.2 199.2 L640.2 201.5 L642.8 203.4 L644.4 206.1 L645.4 209.1 L647.8 211.2 L649.7 213.6 L651.7 216.1 L652.0 219.2 L653.1 222.3 L653.1 225.5 L652.7 229.0 L654.0 231.8 L656.4 234.1 L656.9 237.4 L657.8 240.4 L660.2 242.7 L661.3 245.6 L662.2 248.7 L665.7 250.1 L668.5 252.5 L671.6 254.4 L675.2 255.9 L672.9 258.1 L671.2 260.5 L670.8 263.8 L668.6 266.0 L667.9 269.1 L665.4 271.1 L664.9 274.3 L662.8 276.6 L660.7 278.8 L659.3 281.5 L658.1 284.3 L656.9 287.1 L654.4 289.0 L653.2 291.9 L653.2 295.0 L651.5 297.8 L651.1 300.9 L650.6 303.9 L650.4 307.0 L649.7 310.0" stroke="#86c5e6" stroke-width="0.8" fill="none" stroke-linejoin="round" stroke-linecap="round" /><path d="M682.2 182.0 L683.2 185.4 L685.7 188.1 L687.0 191.4 L687.7 194.9 L689.5 198.0 L690.7 201.5 L692.1 205.0 L692.6 208.7 L692.6 212.3 L692.4 216.0 L690.1 218.7 L689.1 222.0 L687.7 225.2 L685.5 227.4 L682.4 228.7 L680.1 230.7 L678.4 233.4 L675.7 235.0 L673.7 237.5 L670.9 239.4 L669.4 242.3 L669.3 245.7 L667.8 248.6" stroke="#86c5e6" stroke-width="0.8" fill="none" stroke-linejoin="round" stroke-linecap="round" /><path d="M698.4 182.0 L697.5 185.2 L697.3 188.5 L695.9 191.5 L696.0 194.9 L695.1 198.5 L697.9 197.2 L699.9 194.5 L703.0 193.8 L705.2 191.3 L707.9 189.8 L711.2 188.3 L713.9 189.9 L716.6 191.4 L719.9 191.0 L722.4 193.3 L725.5 193.5" stroke="#86c5e6" stroke-width="0.8" fill="none" stroke-linejoin="round" stroke-linecap="round" /><path d="M610.0 203.5 L613.3 203.7 L616.7 203.6 L619.9 204.7 L623.2 205.2 L626.6 204.9 L629.9 205.2 L631.8 207.8 L634.0 210.0 L637.3 211.0 L639.0 213.7 L640.9 216.2 L643.3 218.2 L646.6 219.3 L647.8 223.2 L650.7 225.9 L653.3 228.7" stroke="#86c5e6" stroke-width="0.8" fill="none" stroke-linejoin="round" stroke-linecap="round" /><path d="M754.4 198.0 L751.6 199.7 L750.0 202.7 L747.0 204.2 L745.1 206.7 L743.5 209.7 L740.9 211.5 L739.2 214.4 L736.1 215.9 L734.7 218.6 L733.5 221.5 L731.5 223.9 L729.3 226.2 L728.8 229.4 L726.8 231.8 L725.4 234.6 L723.0 236.7 L722.4 239.8 L719.8 242.4 L719.1 245.7 L717.2 248.5 L717.1 252.1 L715.7 255.1 L714.6 258.3 L712.9 261.2" stroke="#86c5e6" stroke-width="0.8" fill="none" stroke-linejoin="round" stroke-linecap="round" /><path d="M758.0 259.4 L759.1 262.6 L761.7 265.1 L763.2 268.1 L763.4 271.7 L765.0 274.7 L766.5 277.9 L769.1 280.4 L771.8 282.6 L774.1 285.3 L775.5 288.5 L777.7 291.1 L778.9 294.1 L779.1 297.6 L780.3 300.6 L782.5 303.2 L783.3 306.4" stroke="#86c5e6" stroke-width="0.8" fill="none" stroke-linejoin="round" stroke-linecap="round" /><path d="M610.0 259.4 L612.0 261.7 L612.4 265.0 L615.0 266.9 L615.9 269.9 L617.0 272.7 L619.9 274.5 L621.1 277.0 L623.4 279.4 L626.5 280.7 L628.4 283.6 L631.6 284.7 L633.9 287.1 L637.0 288.3" stroke="#86c5e6" stroke-width="0.8" fill="none" stroke-linejoin="round" stroke-linecap="round" /><path d="M644.3 264.0 L647.2 265.7 L650.5 266.3 L653.5 267.6 L656.3 269.4 L659.3 270.6 L662.3 272.0" stroke="#86c5e6" stroke-width="0.8" fill="none" stroke-linejoin="round" stroke-linecap="round" /><path d="M786.9 248.6 L783.9 249.8 L782.0 252.5 L779.3 254.3 L776.7 256.1 L773.7 257.2 L771.2 259.1 L768.8 261.2" stroke="#86c5e6" stroke-width="0.8" fill="none" stroke-linejoin="round" stroke-linecap="round" /><path d="M760.0 182.0 L763.1 183.2 L766.4 183.5 L769.3 185.2 L772.5 186.1 L775.5 187.5 L778.8 187.7 L782.0 188.7 L785.0 190.0" stroke="#86c5e6" stroke-width="0.8" fill="none" stroke-linejoin="round" stroke-linecap="round" /><path d="M724.0 330.0 L727.0 328.8 L728.9 325.9 L732.4 325.6 L734.9 323.7 L737.6 322.1 L739.9 320.0 L740.8 317.0 L742.0 314.2 L743.6 311.5 L744.0 308.3 L746.4 306.0 L747.5 303.1 L748.0 300.0" stroke="#86c5e6" stroke-width="0.8" fill="none" stroke-linejoin="round" stroke-linecap="round" /><path d="M745.0 380.0 L743.9 383.0 L741.9 385.5 L740.6 388.3 L739.2 391.1 L737.8 393.9 L738.1 397.5 L735.5 399.7 L733.8 402.5 L731.9 405.3 L730.6 408.4 L729.6 411.7 L727.2 414.2 L725.6 417.1 L724.2 420.4 L721.2 421.8 L717.8 422.0 L714.9 423.5 L712.2 425.6 L709.1 426.4 L706.1 427.8 L702.7 427.9 L699.7 429.9 L699.4 433.1 L698.4 436.1 L696.3 438.8 L695.9 442.0 L694.9 445.0 L693.9 448.0 L693.5 451.2 L692.8 454.3 L691.0 457.0 L690.0 460.0" stroke="#86c5e6" stroke-width="0.8" fill="none" stroke-linejoin="round" stroke-linecap="round" /><path d="M780.0 190.0 L780.1 193.1 L778.5 196.1 L778.9 199.2 L778.7 202.3 L777.3 205.3 L777.4 208.4 L776.8 211.5 L776.5 214.6 L776.2 217.6 L775.6 220.7 L776.0 223.9 L775.3 226.9 L775.4 230.1 L773.4 232.8 L773.2 236.1 L772.2 239.1 L770.7 241.9 L770.8 245.3 L769.8 248.3 L767.4 250.8 L767.6 254.2 L765.8 256.9 L765.0 260.0" stroke="#86c5e6" stroke-width="0.8" fill="none" stroke-linejoin="round" stroke-linecap="round" /><path d="M478.3 280.0 L480.7 282.1 L482.8 284.4 L485.4 286.4 L487.3 290.1 L490.5 292.6 L493.1 294.9 L495.2 297.7 L498.1 299.5 L501.1 301.2 L504.2 302.7 L507.5 304.6 L508.7 307.4 L508.9 310.8 L510.3 313.5 L512.7 315.7 L513.7 318.7 L515.5 321.2 L516.3 324.3 L518.4 326.6 L519.0 330.3 L521.8 333.0 L521.8 336.9 L523.9 339.9 L524.2 343.0 L524.4 346.3 L523.4 349.1 L521.7 351.5 L518.6 352.0 L515.6 352.8 L512.6 353.1 L509.4 353.0 L506.3 352.5 L503.4 353.2 L498.3 350.0" stroke="#86c5e6" stroke-width="0.8" fill="none" stroke-linejoin="round" stroke-linecap="round" /><path d="M510.0 280.0 L511.8 282.7 L514.6 284.6 L516.1 287.6 L519.0 289.5 L520.7 292.2 L522.3 294.9 L523.9 297.6 L524.5 301.0 L527.3 303.8 L529.1 300.7 L531.1 297.8 L533.5 295.2 L536.4 293.0 L538.5 290.0 L538.8 286.7 L539.7 283.4 L540.0 280.0" stroke="#86c5e6" stroke-width="0.8" fill="none" stroke-linejoin="round" stroke-linecap="round" /><path d="M526.7 303.3 L526.2 306.6 L524.9 309.9 L525.8 313.4 L524.3 316.6 L525.1 320.1 L523.0 323.2 L523.3 326.7" stroke="#86c5e6" stroke-width="0.8" fill="none" stroke-linejoin="round" stroke-linecap="round" /><path d="M441.0 298.3 L443.1 301.1 L445.4 303.5 L448.8 304.9 L450.6 307.9 L453.6 309.8 L455.4 312.6 L457.0 315.5 L459.4 317.9 L460.6 321.1 L463.9 322.8 L465.7 325.6 L468.2 327.9 L469.4 331.3 L472.1 333.4 L474.3 336.0 L476.7 338.3 L479.4 340.2 L482.3 341.8 L484.3 344.5 L486.8 346.5 L489.6 347.4 L492.4 348.6 L495.5 348.7 L498.8 350.0 L499.0 353.3 L497.8 356.7 L498.1 360.9 L502.6 360.3 L507.1 362.0 L505.5 364.5 L503.4 366.8 L501.0 368.9 L498.3 370.6 L497.0 373.7 L494.7 375.8 L491.7 377.3 L490.0 380.0" stroke="#86c5e6" stroke-width="0.8" fill="none" stroke-linejoin="round" stroke-linecap="round" /><path d="M556.7 308.3 L554.4 310.6 L550.9 311.0 L548.2 312.6 L545.7 314.6 L543.7 317.0 L541.2 319.3 L538.9 321.7 L537.3 324.7 L535.7 327.6 L533.1 329.9 L531.3 333.1 L529.7 336.5 L528.9 340.2 L526.7 343.3" stroke="#86c5e6" stroke-width="0.8" fill="none" stroke-linejoin="round" stroke-linecap="round" /><path d="M556.7 326.7 L554.1 328.8 L551.0 329.9 L547.8 330.7 L545.0 332.5 L541.7 333.2 L539.3 335.8 L536.0 336.3 L533.3 338.3" stroke="#86c5e6" stroke-width="0.8" fill="none" stroke-linejoin="round" stroke-linecap="round" /><path d="M441.0 609.6 L443.9 608.5 L447.0 608.6 L449.9 608.0 L453.0 608.9 L456.1 609.1 L459.0 607.8 L461.8 607.5 L463.9 605.3 L466.4 603.4 L469.0 601.6 L471.1 599.3 L474.0 597.9 L476.2 595.6 L478.2 593.1 L481.3 592.0 L483.3 589.6 L485.7 587.5 L489.1 586.6 L491.5 584.1 L494.9 583.2 L497.2 580.5 L500.5 579.4" stroke="#86c5e6" stroke-width="0.8" fill="none" stroke-linejoin="round" stroke-linecap="round" /><path d="M543.6 563.8 L541.5 566.2 L541.5 569.6 L538.9 571.8 L537.3 574.4 L536.9 577.7 L535.2 580.3 L534.0 583.1 L532.6 585.9 L532.5 589.1 L530.8 591.7 L530.2 594.8 L529.9 597.9 L527.7 600.4 L526.0 603.4 L525.5 606.8 L524.2 610.0 L522.7 613.0 L520.6 615.9 L519.9 619.3 L518.4 622.1 L516.3 624.8 L515.3 628.3 L512.3 630.2 L509.7 632.4 L508.1 635.4 L506.6 638.5 L504.1 640.7 L500.7 641.0 L497.9 643.0 L494.8 644.3 L491.3 644.2 L488.3 645.6 L485.4 647.3 L482.2 648.3 L479.2 649.7 L476.1 650.4 L472.6 649.9 L469.5 650.8 L466.4 651.7 L463.1 652.0 L460.3 653.9 L456.7 653.9 L453.7 655.4 L450.9 657.6 L447.4 657.9 L444.1 658.5 L441.0 660.0" stroke="#86c5e6" stroke-width="0.8" fill="none" stroke-linejoin="round" stroke-linecap="round" /><path d="M572.0 629.8 L575.0 630.3 L578.0 630.4 L580.8 632.0 L583.9 631.6 L586.9 631.9 L589.8 632.7 L592.9 632.7 L595.7 633.3 L598.7 632.1 L600.7 629.5 L603.5 628.0 L606.3 626.5 L609.1 625.0 L611.9 623.6 L614.3 621.5 L617.7 621.0 L619.8 618.1 L622.6 617.1 L625.8 617.2 L628.5 615.6 L631.3 614.5 L634.3 614.1 L636.9 612.1 L639.6 611.7 L642.0 609.6 L644.7 607.7 L645.9 604.7 L648.3 602.7 L650.2 600.1 L651.0 597.1 L653.5 595.1 L655.5 592.8 L657.3 590.4 L658.5 587.6 L660.0 585.0" stroke="#86c5e6" stroke-width="0.8" fill="none" stroke-linejoin="round" stroke-linecap="round" /><path d="M441.0 555.0 L443.8 553.6 L446.7 552.4 L449.7 551.4 L452.5 549.9 L455.1 548.7 L458.2 548.2 L461.0 546.6 L464.1 546.9 L467.0 545.8 L470.0 545.0" stroke="#86c5e6" stroke-width="0.8" fill="none" stroke-linejoin="round" stroke-linecap="round" /><path d="M441.0 520.0 L443.9 521.7 L447.2 522.3 L450.4 523.3 L453.5 524.4 L456.8 525.0 L459.7 526.3 L462.0 528.9 L465.4 530.2 L467.4 533.1 L469.9 535.5 L472.3 537.9 L475.0 540.0" stroke="#86c5e6" stroke-width="0.8" fill="none" stroke-linejoin="round" stroke-linecap="round" /><path d="M600.0 640.0 L601.4 642.8 L603.9 644.9 L606.3 647.0 L607.8 649.8 L608.8 653.0 L610.9 655.3 L612.5 658.0 L614.9 660.1 L616.0 663.7 L618.5 666.6 L620.0 670.0" stroke="#86c5e6" stroke-width="0.8" fill="none" stroke-linejoin="round" stroke-linecap="round" /><path d="M650.0 670.0 L650.9 666.7 L652.1 663.4 L652.3 659.9 L652.7 656.5 L653.6 653.2 L655.1 650.1 L656.9 647.6 L659.1 645.6 L661.9 644.1 L664.0 641.8 L665.2 638.7 L667.9 637.2 L670.0 635.0 L673.2 633.7 L676.5 632.8 L679.8 631.9 L683.5 632.1 L686.8 631.6 L690.0 630.0" stroke="#86c5e6" stroke-width="0.8" fill="none" stroke-linejoin="round" stroke-linecap="round" /><path d="M705.0 610.0 L704.1 613.0 L702.4 615.8 L702.3 619.1 L701.7 622.2 L699.4 625.2 L701.4 628.1 L702.7 631.2 L703.9 634.3 L704.2 637.8 L706.8 640.4 L708.2 643.5 L708.7 646.9 L709.5 649.9 L710.0 653.5 L708.3 656.7 L706.7 659.8 L706.7 663.3 L706.4 666.8 L705.0 670.0" stroke="#86c5e6" stroke-width="0.8" fill="none" stroke-linejoin="round" stroke-linecap="round" /><path d="M740.0 620.0 L740.8 622.9 L740.5 626.1 L741.7 629.0 L742.0 632.0 L742.9 634.9 L742.3 638.1 L743.4 641.0 L743.6 644.1 L744.9 646.9 L744.9 650.0 L746.4 652.9 L745.9 656.0 L746.5 659.0 L747.4 661.9 L748.1 664.9 L748.0 668.0" stroke="#86c5e6" stroke-width="0.8" fill="none" stroke-linejoin="round" stroke-linecap="round" /><path d="M760.0 590.0 L762.7 591.7 L765.6 593.2 L768.3 594.9 L771.3 596.1 L773.9 597.9 L777.2 598.4 L780.7 599.4 L782.0 602.5 L784.2 604.8 L785.9 607.6 L788.0 610.0" stroke="#86c5e6" stroke-width="0.8" fill="none" stroke-linejoin="round" stroke-linecap="round" /><path d="M545.0 630.0 L546.8 632.5 L548.1 635.5 L549.9 638.0 L552.2 640.3 L554.6 642.3 L556.5 644.8 L558.5 647.2 L560.6 649.9 L560.8 653.3 L561.3 656.7 L562.6 660.0 L563.3 663.3 L564.4 666.6 L565.0 670.0" stroke="#86c5e6" stroke-width="0.8" fill="none" stroke-linejoin="round" stroke-linecap="round" /><path d="M685.8 321.7 L683.5 323.0 L680.8 323.4 L678.7 325.2 L676.5 326.7 L673.7 327.1 L671.4 328.2 L669.3 329.9 L666.6 330.5 L663.8 331.5 L664.0 334.6 L663.5 337.5 L662.6 340.3 L662.2 343.2 L659.7 344.0 L657.6 346.0 L655.1 347.0 L652.9 348.5 L650.0 348.7 L648.1 350.5 L647.5 353.1 L647.8 355.7 L648.5 358.3 L647.3 360.8 L648.3 363.4 L648.6 366.0 L647.5 369.0 L649.9 370.2 L651.9 371.8 L653.7 373.6 L654.9 376.0 L656.9 377.9 L659.4 377.6 L662.0 377.6 L664.5 377.3 L667.0 378.2 L669.5 377.0 L672.1 377.0 L674.6 378.1 L677.1 378.1 L679.7 377.9 L681.5 377.4 L680.8 380.1 L680.6 383.1 L680.0 385.9 L678.5 388.3 L676.6 390.2 L674.0 391.0 L671.9 392.8 L669.1 393.2 L667.3 395.5 L664.4 395.8 L662.2 396.9 L659.7 398.5 L656.9 398.4 L654.3 399.4 L651.6 399.6 L648.9 400.3 L646.1 400.3 L643.5 401.1 L640.7 401.1 L639.7 404.0 L639.4 407.1 L638.5 410.6 L640.7 412.0 L642.7 413.6 L645.2 414.5 L646.9 416.5 L648.9 418.2 L650.8 419.9 L652.8 421.1 L654.6 423.3 L654.9 426.2 L656.6 428.5 L657.3 431.2 L659.4 433.2 L659.9 436.0 L659.3 438.5 L658.5 441.0 L658.4 443.7 L658.5 446.3 L657.9 448.9 L657.3 451.4 L657.5 454.0 L657.2 456.5 L656.3 459.0 L657.4 461.5 L656.7 464.0 L657.6 466.5 L657.4 469.0 L657.6 471.5 L657.1 474.0 L657.9 476.6 L658.6 479.2 L657.8 482.0 L659.0 484.5 L659.7 487.1 L660.2 489.7 L660.7 492.4 L660.9 495.0 L661.1 497.7 L662.1 500.3 L661.9 502.9 L661.0 505.5 L659.0 507.3 L658.1 509.8 L656.3 511.7 L654.7 513.9 L654.9 516.7 L653.5 519.2 L653.3 521.8 L653.2 524.5 L652.6 527.2 L652.1 529.8 L650.8 532.2 L650.7 534.8 L650.2 537.8 L647.9 539.8 L647.0 542.5 L645.3 544.8 L644.8 547.7 L643.2 550.0 L642.4 552.7 L642.5 555.3 L642.9 558.1 L645.2 559.3 L647.6 560.3 L649.7 561.7 L651.8 563.2 L654.0 564.4 L656.2 565.8 L658.3 567.3 L660.3 568.9 L662.7 569.9 L664.7 571.3 L667.0 572.8 L668.2 575.3 L670.0 577.3 L671.9 579.2 L673.4 581.4 L674.3 584.1 L675.8 586.3 L678.1 588.0 L679.5 590.2 L679.9 592.8 L681.4 595.0 L682.1 597.6 L683.4 599.6 L685.1 602.0 L687.5 603.5 L689.6 605.4 L691.8 607.1 L693.9 609.0 L695.6 611.4 L698.0 613.5 L700.8 612.9 L703.5 613.0 L706.2 613.8 L709.0 613.7 L711.8 613.7 L714.5 614.8 L717.2 614.9 L720.0 615.0" stroke="#6aa9dc" stroke-width="0.9" fill="none" stroke-linejoin="round" stroke-linecap="round" /><path d="M490.5 486.8 L492.6 488.3 L494.0 490.6 L496.3 491.8 L498.2 493.6 L500.2 495.2 L501.9 497.1 L503.7 498.9 L506.4 499.7 L508.0 501.8 L509.8 503.6 L511.6 505.4 L513.6 507.1 L515.9 507.8 L518.4 508.2 L520.8 509.4 L523.4 509.0 L525.9 510.1 L528.4 509.8 L531.0 510.1 L533.5 510.1 L536.1 510.0 L538.6 510.8 L541.1 511.3 L543.7 511.0 L546.2 511.4 L548.7 512.1 L551.2 512.4 L553.7 512.7 L556.3 512.3 L558.8 513.5 L561.3 513.3 L563.8 514.3 L566.6 513.5 L569.0 514.3 L571.0 516.3 L573.4 517.5 L576.1 517.6 L578.4 518.8 L580.7 520.1 L583.1 521.0 L585.5 522.1 L587.6 523.4 L589.6 525.1 L592.4 525.6 L594.3 527.3 L595.9 529.4 L598.1 530.8 L600.2 532.3 L601.9 534.3 L604.0 535.7 L605.5 538.0 L607.7 539.8 L610.2 540.4 L612.8 540.4 L615.0 541.7 L617.6 542.0 L620.2 542.1 L622.4 543.9 L624.9 544.9 L627.6 545.0 L629.9 546.5 L632.4 547.6 L635.1 547.8 L637.6 548.9 L640.0 550.0" stroke="#6aa9dc" stroke-width="0.9" fill="none" stroke-linejoin="round" stroke-linecap="round" /><path d="M540.8 567.5 L543.5 567.2 L546.2 566.5 L548.5 564.7 L551.3 564.4 L553.8 563.3 L556.6 563.2 L559.2 562.5 L561.5 561.0 L564.2 560.7 L566.6 559.8 L569.1 559.0 L571.8 558.9 L574.1 557.3 L576.7 556.8 L579.3 556.8 L582.1 556.0 L584.8 555.5 L587.5 554.7 L590.3 554.4 L593.1 554.2 L595.9 554.3 L598.6 553.8 L601.4 553.1 L604.0 552.5 L606.7 552.2 L609.3 551.7 L612.1 551.8 L614.7 551.2 L617.4 550.9 L620.0 550.0" stroke="#6aa9dc" stroke-width="0.9" fill="none" stroke-linejoin="round" stroke-linecap="round" /><path d="M500.0 573.0 L501.3 570.5 L502.1 567.8 L502.9 565.2 L503.9 562.6 L505.6 560.1 L506.0 557.6 L505.5 554.9 L507.1 552.6 L506.5 550.1 L506.5 547.5 L505.7 545.1 L505.3 542.6 L505.6 540.0 L505.8 537.4 L505.0 535.0" stroke="#6aa9dc" stroke-width="0.9" fill="none" stroke-linejoin="round" stroke-linecap="round" /><path d="M676.0 582.0 C676.8 583.3 679.7 587.0 681.0 590.0 C682.3 593.0 683.5 598.3 684.0 600.0" stroke="#86b9e6" stroke-width="3.2" fill="none" stroke-linejoin="round" stroke-linecap="round" /><path d="M502.0 556.0 L505.0 565.0" stroke="#86b9e6" stroke-width="3" fill="none" stroke-linejoin="round" stroke-linecap="round" /><path d="M441.0 481.0 C445.3 479.3 459.7 471.5 467.0 471.0 C474.3 470.5 480.2 474.2 485.0 478.0 C489.8 481.8 492.1 488.9 496.0 494.0 C499.9 499.1 502.9 504.1 508.6 508.4 C514.3 512.7 524.2 510.8 530.0 520.0 C535.8 529.2 537.2 545.8 543.6 563.8 C550.0 581.8 565.7 614.9 568.3 628.0 C570.9 641.1 567.4 635.6 559.1 642.6 C550.9 649.6 525.5 665.4 518.8 670.0" stroke="#9a9ba0" stroke-width="0.8" fill="none" stroke-linejoin="round" stroke-linecap="round" /><path d="M700.0 500.0 C705.0 502.5 718.3 510.0 730.0 515.0 C741.7 520.0 760.3 525.0 770.0 530.0 C779.7 535.0 785.0 542.5 788.0 545.0" stroke="#9a9ba0" stroke-width="0.7" fill="none" stroke-linejoin="round" stroke-linecap="round" /><path d="M600.0 375.0 C605.0 375.8 621.7 376.7 630.0 380.0 C638.3 383.3 646.7 392.5 650.0 395.0" stroke="#9a9ba0" stroke-width="0.6" fill="none" stroke-linejoin="round" stroke-linecap="round" /><path d="M575.0 640.0 L590.0 632.0 L560.0 670.0 L535.0 670.0Z" fill="#efeeea" /><path d="M538.9 182.0 C540.8 187.5 546.3 204.5 550.0 215.0 C553.7 225.5 559.7 234.6 561.0 245.0 C562.3 255.4 557.1 267.6 558.0 277.5 C558.9 287.4 565.0 297.8 566.4 304.5 C567.8 311.2 568.2 312.7 566.4 318.0 C564.6 323.3 557.0 330.7 555.5 336.1 C554.0 341.5 556.7 340.9 557.3 350.5 C557.9 360.1 557.0 380.6 559.1 393.9 C561.2 407.1 568.2 424.0 570.0 430.0" stroke="#c9ced8" stroke-width="1.8" fill="none" stroke-linejoin="round" stroke-linecap="round" /><path d="M765.2 182.0 C762.5 183.5 754.4 186.3 749.0 190.8 C743.6 195.3 737.5 201.4 732.7 208.9 C727.9 216.4 724.3 228.8 720.1 236.0 C715.9 243.2 709.6 245.3 707.5 252.2 C705.4 259.1 704.2 269.1 707.5 277.5 C710.8 285.9 722.5 296.6 727.3 302.7 C732.1 308.8 732.8 310.6 736.4 314.4 C740.0 318.2 745.1 320.5 749.0 325.3 C752.9 330.1 760.1 337.3 759.8 343.3 C759.5 349.3 751.7 354.5 747.2 361.4 C742.7 368.3 737.5 375.8 732.7 384.8 C727.9 393.8 721.6 408.0 718.3 415.5 C715.0 423.0 716.2 417.2 712.9 430.0 C709.6 442.8 703.5 481.2 698.4 492.2 C693.3 503.2 684.0 491.6 682.2 495.8 C680.4 500.0 682.8 509.4 687.6 517.5 C692.4 525.6 705.0 538.9 711.0 544.5 C717.0 550.1 721.5 549.9 723.6 551.0" stroke="#c9ced8" stroke-width="1.8" fill="none" stroke-linejoin="round" stroke-linecap="round" /><path d="M682.2 494.0 C691.2 494.6 718.8 495.7 736.4 497.6 C754.0 499.6 779.4 504.4 788.0 505.7" stroke="#c9ced8" stroke-width="2.6" fill="none" stroke-linejoin="round" stroke-linecap="round" /><path d="M723.6 551.0 C727.9 553.1 738.6 556.8 749.3 563.8 C760.0 570.8 781.4 588.3 787.8 593.2" stroke="#c9ced8" stroke-width="3.0" fill="none" stroke-linejoin="round" stroke-linecap="round" /><path d="M499.6 390.3 C506.5 392.4 528.2 397.5 541.1 402.9 C554.0 408.3 564.1 415.7 577.2 422.7 C590.4 429.7 602.5 433.1 620.0 445.0 C637.5 456.9 671.7 485.8 682.0 494.0" stroke="#c9ced8" stroke-width="2.2" fill="none" stroke-linejoin="round" stroke-linecap="round" /><path d="M441.0 397.0 C445.3 396.6 457.2 395.9 467.0 394.8 C476.8 393.7 494.2 391.1 499.6 390.3" stroke="#c9ced8" stroke-width="2.0" fill="none" stroke-linejoin="round" stroke-linecap="round" /><path d="M502.3 573.9 C502.6 577.4 504.1 588.4 504.1 595.0 C504.1 601.6 504.4 606.3 502.3 613.3 C500.2 620.3 495.0 629.8 491.3 637.1 C487.6 644.4 484.9 651.8 480.3 657.3 C475.7 662.8 466.6 667.9 463.8 670.0" stroke="#c9ced8" stroke-width="2.6" fill="none" stroke-linejoin="round" stroke-linecap="round" /><path d="M630.0 300.0 C631.0 303.0 637.7 312.2 636.0 318.0 C634.3 323.8 626.0 328.0 620.0 335.0 C614.0 342.0 603.3 355.8 600.0 360.0" stroke="#c9ced8" stroke-width="1.5" fill="none" stroke-linejoin="round" stroke-linecap="round" /><path d="M760.0 343.0 L788.0 340.0" stroke="#c9ced8" stroke-width="1.0" fill="none" stroke-linejoin="round" stroke-linecap="round" /><path d="M566.0 304.0 C568.3 306.7 574.3 315.7 580.0 320.0 C585.7 324.3 592.5 325.8 600.0 330.0 C607.5 334.2 620.8 342.5 625.0 345.0" stroke="#c9ced8" stroke-width="1.0" fill="none" stroke-linejoin="round" stroke-linecap="round" /><path d="M747.2 420.0 L768.8 470.5" stroke="#bfe3c9" stroke-width="3" fill="none" stroke-linejoin="round" stroke-linecap="round" /><path d="M752.0 420.0 L774.0 470.0" stroke="#d5eddb" stroke-width="1.5" fill="none" stroke-linejoin="round" stroke-linecap="round" /><path d="M441.0 393.0 C443.5 392.7 448.8 392.6 456.2 391.2 C463.6 389.8 474.6 389.0 485.1 384.8 C495.6 380.6 510.1 371.6 519.4 365.9 C528.7 360.2 534.5 357.6 541.1 350.5 C547.7 343.4 554.3 329.8 559.1 323.5 C563.9 317.2 564.6 316.5 570.0 312.6 C575.4 308.7 584.9 303.4 591.6 300.0 C598.3 296.6 602.9 292.6 610.0 292.0 C617.1 291.4 626.9 291.1 634.4 296.3 C641.9 301.6 648.3 315.7 655.1 323.5 C661.9 331.3 668.1 336.7 675.0 343.3 C681.9 349.9 689.4 358.4 696.6 363.2 C703.8 368.0 712.3 369.5 718.3 372.2 C724.3 374.9 727.3 375.8 732.7 379.4 C738.1 383.0 744.8 389.7 750.8 393.9 C756.8 398.1 762.6 401.9 768.8 404.7 C775.0 407.5 784.8 409.5 788.0 410.5" stroke="#95a6c6" stroke-width="3.8" fill="none" stroke-linejoin="round" stroke-linecap="round" /><path d="M441.0 393.0 C443.5 392.7 448.8 392.6 456.2 391.2 C463.6 389.8 474.6 389.0 485.1 384.8 C495.6 380.6 510.1 371.6 519.4 365.9 C528.7 360.2 534.5 357.6 541.1 350.5 C547.7 343.4 554.3 329.8 559.1 323.5 C563.9 317.2 564.6 316.5 570.0 312.6 C575.4 308.7 584.9 303.4 591.6 300.0 C598.3 296.6 602.9 292.6 610.0 292.0 C617.1 291.4 626.9 291.1 634.4 296.3 C641.9 301.6 648.3 315.7 655.1 323.5 C661.9 331.3 668.1 336.7 675.0 343.3 C681.9 349.9 689.4 358.4 696.6 363.2 C703.8 368.0 712.3 369.5 718.3 372.2 C724.3 374.9 727.3 375.8 732.7 379.4 C738.1 383.0 744.8 389.7 750.8 393.9 C756.8 398.1 762.6 401.9 768.8 404.7 C775.0 407.5 784.8 409.5 788.0 410.5" stroke="#aab8d4" stroke-width="1.6" fill="none" stroke-linejoin="round" stroke-linecap="round" /><path d="M502.3 573.9 C507.2 574.0 523.6 574.3 531.6 574.8 C539.6 575.3 542.4 576.2 550.0 576.7 C557.6 577.2 569.9 576.1 577.5 577.6 C585.1 579.1 588.8 582.3 595.8 585.8 C602.8 589.3 612.6 595.0 619.6 598.7 C626.6 602.4 631.5 604.1 637.5 607.8 C643.5 611.4 649.7 617.9 655.8 620.6 C661.9 623.4 668.0 624.9 674.1 624.3 C680.2 623.7 686.1 620.7 692.5 617.0 C698.9 613.3 706.8 608.4 712.6 602.3 C718.4 596.2 722.4 587.9 727.3 580.3 C732.2 572.7 737.1 562.9 742.0 556.5 C746.9 550.1 751.1 545.4 756.6 541.8 C762.1 538.2 769.8 536.6 775.0 535.0 C780.2 533.4 785.8 532.5 788.0 532.0" stroke="#95a6c6" stroke-width="3.2" fill="none" stroke-linejoin="round" stroke-linecap="round" /><path d="M502.3 573.9 C507.2 574.0 523.6 574.3 531.6 574.8 C539.6 575.3 542.4 576.2 550.0 576.7 C557.6 577.2 569.9 576.1 577.5 577.6 C585.1 579.1 588.8 582.3 595.8 585.8 C602.8 589.3 612.6 595.0 619.6 598.7 C626.6 602.4 631.5 604.1 637.5 607.8 C643.5 611.4 649.7 617.9 655.8 620.6 C661.9 623.4 668.0 624.9 674.1 624.3 C680.2 623.7 686.1 620.7 692.5 617.0 C698.9 613.3 706.8 608.4 712.6 602.3 C718.4 596.2 722.4 587.9 727.3 580.3 C732.2 572.7 737.1 562.9 742.0 556.5 C746.9 550.1 751.1 545.4 756.6 541.8 C762.1 538.2 769.8 536.6 775.0 535.0 C780.2 533.4 785.8 532.5 788.0 532.0" stroke="#aab8d4" stroke-width="1.2" fill="none" stroke-linejoin="round" stroke-linecap="round" /><circle cx="502.5" cy="574" r="3.2" fill="none" stroke="#95a6c6" stroke-width="2"/><g fill="#3b3d46"><rect x="668.5" y="286" width="7" height="6"/><rect x="668" y="284.5" width="2" height="2"/><rect x="671" y="284.5" width="2" height="2"/><rect x="674" y="284.5" width="2" height="2"/></g><rect x="670.5" y="288" width="3" height="2" fill="#fff"/><circle cx="632" cy="428" r="2.8" fill="none" stroke="#8d9097" stroke-width="0.6"/><path d="M630 430L634 426" stroke="#8d9097" stroke-width="0.6"/><circle cx="630" cy="451" r="2.8" fill="none" stroke="#8d9097" stroke-width="0.6"/><path d="M628 453L632 449" stroke="#8d9097" stroke-width="0.6"/><circle cx="743" cy="553" r="2.8" fill="none" stroke="#8d9097" stroke-width="0.6"/><path d="M741 555L745 551" stroke="#8d9097" stroke-width="0.6"/><circle cx="750" cy="571" r="2.8" fill="none" stroke="#8d9097" stroke-width="0.6"/><path d="M748 573L752 569" stroke="#8d9097" stroke-width="0.6"/><circle cx="764" cy="568" r="2.8" fill="none" stroke="#8d9097" stroke-width="0.6"/><path d="M762 570L766 566" stroke="#8d9097" stroke-width="0.6"/><circle cx="778" cy="529" r="2.8" fill="none" stroke="#8d9097" stroke-width="0.6"/><path d="M776 531L780 527" stroke="#8d9097" stroke-width="0.6"/><circle cx="769" cy="577" r="2.8" fill="none" stroke="#8d9097" stroke-width="0.6"/><path d="M767 579L771 575" stroke="#8d9097" stroke-width="0.6"/><circle cx="580" cy="410" r="2.8" fill="none" stroke="#8d9097" stroke-width="0.6"/><path d="M578 412L582 408" stroke="#8d9097" stroke-width="0.6"/><circle cx="746" cy="596" r="3.5" fill="none" stroke="#4f86d0" stroke-width="1"/><path d="M746 592V600M742 596H750" stroke="#4f86d0" stroke-width="1"/><path d="M595.8 346.8L598 343L600.2 346.8Z" fill="#3b3d46"/><path d="M450.8 454.8L453 451L455.2 454.8Z" fill="#3b3d46"/><path d="M783.8 669.8L786 666L788.2 669.8Z" fill="#3b3d46"/><text transform="translate(486 207) scale(0.92 1)" font-size="7.6" fill="#4e5058" font-weight="normal" font-style="normal" text-anchor="start" letter-spacing="0" stroke="#f9f8f4" stroke-width="1.6" paint-order="stroke">Can Soler</text><text transform="translate(441 242.5) scale(0.92 1)" font-size="7.6" fill="#4e5058" font-weight="normal" font-style="normal" text-anchor="start" letter-spacing="0" stroke="#f9f8f4" stroke-width="1.6" paint-order="stroke">etllers</text><text transform="translate(550 258) scale(0.88 1)" font-size="7.6" fill="#4e5058" font-weight="normal" font-style="normal" text-anchor="start" letter-spacing="0" stroke="#f9f8f4" stroke-width="1.6" paint-order="stroke">les Casetes</text><text transform="translate(547.4 266.2) scale(0.92 1)" font-size="7.6" fill="#4e5058" font-weight="normal" font-style="normal" text-anchor="start" letter-spacing="0" stroke="#f9f8f4" stroke-width="1.6" paint-order="stroke">d'en Mussons</text><text transform="translate(699.4 281.2) scale(0.86 1)" font-size="11" fill="#5b5d66" font-weight="bold" font-style="normal" text-anchor="start" letter-spacing="0" stroke="#f9f8f4" stroke-width="1.6" paint-order="stroke">Òdena</text><text transform="translate(477 318.5) scale(0.92 1)" font-size="7.6" fill="#4e5058" font-weight="normal" font-style="normal" text-anchor="start" letter-spacing="0" stroke="#f9f8f4" stroke-width="1.6" paint-order="stroke">la Font d'en</text><text transform="translate(479.7 327) scale(0.92 1)" font-size="7.6" fill="#4e5058" font-weight="normal" font-style="normal" text-anchor="start" letter-spacing="0" stroke="#f9f8f4" stroke-width="1.6" paint-order="stroke">Masamau</text><text transform="translate(666 319.7) scale(0.85 1)" font-size="8.0" fill="#4e5058" font-weight="normal" font-style="normal" text-anchor="start" letter-spacing="0" stroke="#f9f8f4" stroke-width="1.6" paint-order="stroke">Santa Olga</text><text transform="translate(560 339.2) scale(0.88 1)" font-size="7.6" fill="#4e5058" font-weight="normal" font-style="normal" text-anchor="start" letter-spacing="0" stroke="#f9f8f4" stroke-width="1.6" paint-order="stroke">Turó de les</text><text transform="translate(566.4 346.5) scale(0.92 1)" font-size="7.6" fill="#4e5058" font-weight="normal" font-style="normal" text-anchor="start" letter-spacing="0" stroke="#f9f8f4" stroke-width="1.6" paint-order="stroke">Guixeres</text><text transform="translate(584 353.5) scale(1.0 1)" font-size="6.2" fill="#777" font-weight="normal" font-style="normal" text-anchor="start" letter-spacing="0" stroke="#f9f8f4" stroke-width="1.6" paint-order="stroke">431</text><text transform="translate(504.1 382) scale(0.92 1)" font-size="7.6" fill="#4e5058" font-weight="normal" font-style="normal" text-anchor="start" letter-spacing="0" stroke="#f9f8f4" stroke-width="1.6" paint-order="stroke">les Comes</text><text transform="translate(462.6 407) scale(0.92 1)" font-size="7.6" fill="#4e5058" font-weight="normal" font-style="normal" text-anchor="start" letter-spacing="0" stroke="#f9f8f4" stroke-width="1.6" paint-order="stroke">els Set</text><text transform="translate(462 415.2) scale(0.92 1)" font-size="7.6" fill="#4e5058" font-weight="normal" font-style="normal" text-anchor="start" letter-spacing="0" stroke="#f9f8f4" stroke-width="1.6" paint-order="stroke">Camins</text><text transform="translate(463.5 438.5) scale(0.92 1)" font-size="7.2" fill="#4e5058" font-weight="normal" font-style="normal" text-anchor="start" letter-spacing="0" stroke="#f9f8f4" stroke-width="1.6" paint-order="stroke">Fàtima</text><text transform="translate(441 489.4) scale(0.92 1)" font-size="7.2" fill="#4e5058" font-weight="normal" font-style="normal" text-anchor="start" letter-spacing="0" stroke="#f9f8f4" stroke-width="1.6" paint-order="stroke">ista Alegre</text><text transform="translate(555.5 489.5) scale(0.86 1)" font-size="16.5" fill="#5b5d66" font-weight="bold" font-style="normal" text-anchor="start" letter-spacing="0" stroke="#f9f8f4" stroke-width="1.6" paint-order="stroke">Igualada</text><text transform="translate(496.9 517.8) scale(0.84 1)" font-size="10.5" fill="#5b5d66" font-weight="bold" font-style="normal" text-anchor="start" letter-spacing="0" stroke="#f9f8f4" stroke-width="1.6" paint-order="stroke">Santa Margarida</text><text transform="translate(496.9 530.4) scale(0.84 1)" font-size="10.5" fill="#5b5d66" font-weight="bold" font-style="normal" text-anchor="start" letter-spacing="0" stroke="#f9f8f4" stroke-width="1.6" paint-order="stroke">de Montbui</text><text transform="translate(712 442) scale(1.0 1)" font-size="5.8" fill="#5b5d66" font-weight="normal" font-style="italic" text-anchor="middle" letter-spacing="0" stroke="#f9f8f4" stroke-width="1.6" paint-order="stroke">Pla de les</text><text transform="translate(712 448.4) scale(1.0 1)" font-size="5.8" fill="#5b5d66" font-weight="normal" font-style="italic" text-anchor="middle" letter-spacing="0" stroke="#f9f8f4" stroke-width="1.6" paint-order="stroke">Governeres</text><text transform="translate(694.5 469.2) scale(0.82 1)" font-size="7.8" fill="#4e5058" font-weight="normal" font-style="normal" text-anchor="start" letter-spacing="0" stroke="#f9f8f4" stroke-width="1.6" paint-order="stroke">Can Riba</text><text transform="translate(757 459) scale(0.92 1)" font-size="8.6" fill="#7d8797" font-weight="normal" font-style="normal" text-anchor="middle" letter-spacing="0" stroke="#f9f8f4" stroke-width="1.6" paint-order="stroke">Aeròdrom</text><text transform="translate(724.6 467.7) scale(0.92 1)" font-size="8.6" fill="#7d8797" font-weight="normal" font-style="normal" text-anchor="start" letter-spacing="0" stroke="#f9f8f4" stroke-width="1.6" paint-order="stroke">d'Igualada - Òdena</text><text transform="translate(757.4 476.1) scale(0.92 1)" font-size="8.6" fill="#7d8797" font-weight="normal" font-style="normal" text-anchor="middle" letter-spacing="0" stroke="#f9f8f4" stroke-width="1.6" paint-order="stroke">General Vives</text><text transform="translate(657.8 548.8) scale(0.83 1)" font-size="10.8" fill="#5b5d66" font-weight="bold" font-style="normal" text-anchor="start" letter-spacing="0" stroke="#f9f8f4" stroke-width="1.6" paint-order="stroke">Vilanova del Camí</text><text transform="translate(696.1 592.7) scale(0.92 1)" font-size="7.6" fill="#4e5058" font-weight="normal" font-style="normal" text-anchor="start" letter-spacing="0" stroke="#f9f8f4" stroke-width="1.6" paint-order="stroke">els Moletons</text><text transform="translate(683.3 612.3) scale(1.0 1)" font-size="7.0" fill="#5e97d6" font-weight="normal" font-style="italic" text-anchor="start" letter-spacing="0" stroke="#f9f8f4" stroke-width="1.6" paint-order="stroke">Bassa del Fontanelles</text><text transform="translate(525.2 599.3) scale(0.92 1)" font-size="6.6" fill="#5b5d66" font-weight="normal" font-style="normal" text-anchor="start" letter-spacing="0" stroke="#f9f8f4" stroke-width="1.6" paint-order="stroke">les Parellades</text><text transform="translate(453.7 668.3) scale(0.86 1)" font-size="8.0" fill="#4e5058" font-weight="normal" font-style="normal" text-anchor="start" letter-spacing="0" stroke="#f9f8f4" stroke-width="1.6" paint-order="stroke">Santa Margarida</text><text transform="translate(664 664) scale(0.92 1)" font-size="6.4" fill="#5b5d66" font-weight="normal" font-style="italic" text-anchor="start" letter-spacing="0" stroke="#f9f8f4" stroke-width="1.6" paint-order="stroke">el Cosconar</text><text transform="translate(721.4 663.3) scale(0.88 1)" font-size="7.6" fill="#4e5058" font-weight="normal" font-style="normal" text-anchor="start" letter-spacing="0" stroke="#f9f8f4" stroke-width="1.6" paint-order="stroke">Pujol de la</text><text transform="translate(726 670.8) scale(0.92 1)" font-size="7.6" fill="#4e5058" font-weight="normal" font-style="normal" text-anchor="start" letter-spacing="0" stroke="#f9f8f4" stroke-width="1.6" paint-order="stroke">Guàrdia</text><text transform="translate(772.2 659) scale(0.92 1)" font-size="6.2" fill="#5b5d66" font-weight="normal" font-style="normal" text-anchor="start" letter-spacing="0" stroke="#f9f8f4" stroke-width="1.6" paint-order="stroke">Coll de</text><text transform="translate(771 667.5) scale(0.92 1)" font-size="6.2" fill="#5b5d66" font-weight="normal" font-style="normal" text-anchor="start" letter-spacing="0" stroke="#f9f8f4" stroke-width="1.6" paint-order="stroke">Socarra</text><circle cx="545" cy="191" r="0.9" fill="#333"/><text transform="translate(546.5 192) scale(1.0 1)" font-size="4.6" fill="#555" font-weight="normal" font-style="normal" text-anchor="start" letter-spacing="0" stroke="#f9f8f4" stroke-width="1.6" paint-order="stroke">K-16</text><circle cx="589" cy="331" r="0.9" fill="#333"/><text transform="translate(590.5 332) scale(1.0 1)" font-size="4.6" fill="#555" font-weight="normal" font-style="normal" text-anchor="start" letter-spacing="0" stroke="#f9f8f4" stroke-width="1.6" paint-order="stroke">K-555</text><circle cx="567" cy="315" r="0.9" fill="#333"/><text transform="translate(568.5 316) scale(1.0 1)" font-size="4.6" fill="#555" font-weight="normal" font-style="normal" text-anchor="start" letter-spacing="0" stroke="#f9f8f4" stroke-width="1.6" paint-order="stroke">K-554</text><circle cx="569" cy="322" r="0.9" fill="#333"/><text transform="translate(570.5 323) scale(1.0 1)" font-size="4.6" fill="#555" font-weight="normal" font-style="normal" text-anchor="start" letter-spacing="0" stroke="#f9f8f4" stroke-width="1.6" paint-order="stroke">K-18</text><circle cx="522" cy="366" r="0.9" fill="#333"/><text transform="translate(523.5 367) scale(1.0 1)" font-size="4.6" fill="#555" font-weight="normal" font-style="normal" text-anchor="start" letter-spacing="0" stroke="#f9f8f4" stroke-width="1.6" paint-order="stroke">K-553</text><circle cx="457.5" cy="390.5" r="0.9" fill="#333"/><text transform="translate(459.0 391.5) scale(1.0 1)" font-size="4.6" fill="#555" font-weight="normal" font-style="normal" text-anchor="start" letter-spacing="0" stroke="#f9f8f4" stroke-width="1.6" paint-order="stroke">K-552</text><circle cx="737" cy="213" r="0.9" fill="#333"/><text transform="translate(738.5 214) scale(1.0 1)" font-size="4.6" fill="#555" font-weight="normal" font-style="normal" text-anchor="start" letter-spacing="0" stroke="#f9f8f4" stroke-width="1.6" paint-order="stroke">K-70</text><circle cx="684" cy="344" r="0.9" fill="#333"/><text transform="translate(685.5 345) scale(1.0 1)" font-size="4.6" fill="#555" font-weight="normal" font-style="normal" text-anchor="start" letter-spacing="0" stroke="#f9f8f4" stroke-width="1.6" paint-order="stroke">K-556</text><circle cx="730" cy="287" r="0.9" fill="#333"/><text transform="translate(731.5 288) scale(1.0 1)" font-size="4.6" fill="#555" font-weight="normal" font-style="normal" text-anchor="start" letter-spacing="0" stroke="#f9f8f4" stroke-width="1.6" paint-order="stroke">K-3</text><circle cx="747" cy="361" r="0.9" fill="#333"/><text transform="translate(748.5 362) scale(1.0 1)" font-size="4.6" fill="#555" font-weight="normal" font-style="normal" text-anchor="start" letter-spacing="0" stroke="#f9f8f4" stroke-width="1.6" paint-order="stroke">K-2</text><circle cx="734" cy="382" r="0.9" fill="#333"/><text transform="translate(735.5 383) scale(1.0 1)" font-size="4.6" fill="#555" font-weight="normal" font-style="normal" text-anchor="start" letter-spacing="0" stroke="#f9f8f4" stroke-width="1.6" paint-order="stroke">K-557</text><circle cx="562" cy="381" r="0.9" fill="#333"/><text transform="translate(563.5 382) scale(1.0 1)" font-size="4.6" fill="#555" font-weight="normal" font-style="normal" text-anchor="start" letter-spacing="0" stroke="#f9f8f4" stroke-width="1.6" paint-order="stroke">K-19</text><circle cx="505" cy="573.5" r="0.9" fill="#333"/><text transform="translate(506.5 574.5) scale(1.0 1)" font-size="4.6" fill="#555" font-weight="normal" font-style="normal" text-anchor="start" letter-spacing="0" stroke="#f9f8f4" stroke-width="1.6" paint-order="stroke">K-63</text><circle cx="578" cy="575" r="0.9" fill="#333"/><text transform="translate(579.5 576) scale(1.0 1)" font-size="4.6" fill="#555" font-weight="normal" font-style="normal" text-anchor="start" letter-spacing="0" stroke="#f9f8f4" stroke-width="1.6" paint-order="stroke">K-94</text><circle cx="641" cy="608" r="0.9" fill="#333"/><text transform="translate(642.5 609) scale(1.0 1)" font-size="4.6" fill="#555" font-weight="normal" font-style="normal" text-anchor="start" letter-spacing="0" stroke="#f9f8f4" stroke-width="1.6" paint-order="stroke">K-88</text><circle cx="494.5" cy="636.5" r="0.9" fill="#333"/><text transform="translate(496.0 637.5) scale(1.0 1)" font-size="4.6" fill="#555" font-weight="normal" font-style="normal" text-anchor="start" letter-spacing="0" stroke="#f9f8f4" stroke-width="1.6" paint-order="stroke">K-82</text><circle cx="720" cy="424" r="0.9" fill="#333"/><text transform="translate(721.5 425) scale(1.0 1)" font-size="4.6" fill="#555" font-weight="normal" font-style="normal" text-anchor="start" letter-spacing="0" stroke="#f9f8f4" stroke-width="1.6" paint-order="stroke">K-1</text><rect x="491.5" y="618.5" width="16" height="9" fill="#fff" stroke="#555" stroke-width="0.7"/><text x="499.5" y="625.5" font-size="6.2" text-anchor="middle" fill="#333">C-37</text><rect x="783" y="532" width="8" height="9" fill="#fff" stroke="#555" stroke-width="0.7"/><text x="785" y="539" font-size="6.2" fill="#333">C</text><g transform="translate(570 432)"><path d="M0 10.8 C-2 8 -6.6 4 -6.6 -0.6 A6.6 6.6 0 0 1 6.6 -0.6 C6.6 4 2 8 0 10.8Z" fill="#d3302c" stroke="#fff" stroke-width="1.2"/><circle cx="0" cy="-0.6" r="1.6" fill="#fff"/></g></svg><div class="abs" style="left:319.5px;top:6.6px;width:21px;height:60px;background:#fff;border-radius:4px;box-shadow:0 0 0 1px rgba(0,0,0,.08)">
<div class="abs" style="left:2px;top:20px;width:17px;height:1px;background:#e6e6e6"></div>
<div class="abs" style="left:2px;top:40px;width:17px;height:1px;background:#e6e6e6"></div>
<svg class="abs" style="left:0;top:0" width="21" height="60" viewBox="0 0 21 60"><path d="M10.5 6v8M6.5 10h8" stroke="#333" stroke-width="1.6"/><path d="M6.5 30h8" stroke="#333" stroke-width="1.6"/><path d="M10.5 45.5L7.5 50h6Z" fill="#333"/><path d="M10.5 54.5L7.5 50h6Z" fill="#c6c6c6"/></svg>
</div><!--/MAP-->
  </div>

  <!-- list -->
  <div id="list" class="abs" style="left:788px;top:181px;width:231px;height:490px;background:#f9f8f3;border:1px solid #e4e4e4;border-left:none;overflow:hidden">
<div class="abs" style="left:0px;top:0px;width:231px;height:137.5px;border:1px solid #b08a2a;box-shadow:inset 0 0 0 .4px #b08a2a;background:#fff"></div><div class="t nov" style="top:13.90px">NOV.</div><div class="t day" style="top:22.70px">15</div><div class="t sm" style="top:13.53px">Tot el dia</div><div class="t ttl" style="top:25.10px">Festa de la Ratafia de<br>l'Anoia a Igualada</div><div class="t sm loc" style="top:60.730000000000004px"><b>Igualada</b> Igualada</div><div class="abs img" style="left:162.79999999999995px;top:11px;width:59px;height:33px"><svg width="59" height="33" viewBox="0 0 59 33" style="position:absolute;left:0;top:0">
<rect width="59" height="33" fill="#fff"/>
<g fill="#8e94a8" opacity=".7"><rect x="1" y="2" width="1" height="1"/><rect x="4" y="2" width="1" height="1"/><rect x="7" y="2" width="1" height="1"/><rect x="10" y="2" width="1" height="1"/><rect x="13" y="2" width="1" height="1"/><rect x="16" y="2" width="1" height="1"/><rect x="19" y="2" width="1" height="1"/><rect x="22" y="2" width="1" height="1"/><rect x="25" y="2" width="1" height="1"/><rect x="28" y="2" width="1" height="1"/><rect x="31" y="2" width="1" height="1"/><rect x="34" y="2" width="1" height="1"/><rect x="37" y="2" width="1" height="1"/><rect x="40" y="2" width="1" height="1"/><rect x="43" y="2" width="1" height="1"/><rect x="46" y="2" width="1" height="1"/><rect x="49" y="2" width="1" height="1"/><rect x="52" y="2" width="1" height="1"/><rect x="55" y="2" width="1" height="1"/><rect x="58" y="2" width="1" height="1"/><rect x="1" y="31" width="1" height="1"/><rect x="4" y="31" width="1" height="1"/><rect x="7" y="31" width="1" height="1"/><rect x="10" y="31" width="1" height="1"/><rect x="13" y="31" width="1" height="1"/><rect x="16" y="31" width="1" height="1"/><rect x="19" y="31" width="1" height="1"/><rect x="22" y="31" width="1" height="1"/><rect x="25" y="31" width="1" height="1"/><rect x="28" y="31" width="1" height="1"/><rect x="31" y="31" width="1" height="1"/><rect x="34" y="31" width="1" height="1"/><rect x="37" y="31" width="1" height="1"/><rect x="40" y="31" width="1" height="1"/><rect x="43" y="31" width="1" height="1"/><rect x="46" y="31" width="1" height="1"/><rect x="49" y="31" width="1" height="1"/><rect x="52" y="31" width="1" height="1"/><rect x="55" y="31" width="1" height="1"/><rect x="58" y="31" width="1" height="1"/><rect x="1" y="5" width="1" height="1"/><rect x="1" y="8" width="1" height="1"/><rect x="1" y="11" width="1" height="1"/><rect x="1" y="14" width="1" height="1"/><rect x="1" y="17" width="1" height="1"/><rect x="1" y="20" width="1" height="1"/><rect x="1" y="23" width="1" height="1"/><rect x="1" y="26" width="1" height="1"/><rect x="1" y="29" width="1" height="1"/><rect x="57" y="5" width="1" height="1"/><rect x="57" y="8" width="1" height="1"/><rect x="57" y="11" width="1" height="1"/><rect x="57" y="14" width="1" height="1"/><rect x="57" y="17" width="1" height="1"/><rect x="57" y="20" width="1" height="1"/><rect x="57" y="23" width="1" height="1"/><rect x="57" y="26" width="1" height="1"/><rect x="57" y="29" width="1" height="1"/></g>
<path d="M20 4 Q29 -1 38 4 L36 8 Q29 6 22 8Z" fill="#4a4d58" opacity=".85"/>
<text x="29.5" y="13" font-size="6.8" font-weight="bold" text-anchor="middle" fill="#22232b" transform="scale(1 1)" textLength="42" lengthAdjust="spacingAndGlyphs">FESTA DE LA</text>
<text x="29.5" y="22.5" font-size="10.5" font-weight="bold" text-anchor="middle" fill="#3a2a2e" textLength="42" lengthAdjust="spacingAndGlyphs">RATAFIA</text>
<text x="29.5" y="29" font-size="5.2" font-weight="bold" text-anchor="middle" fill="#22232b" textLength="34" lengthAdjust="spacingAndGlyphs">DE L'ANOIA</text>
</svg></div><div class="abs" style="left:44px;top:78.3px;width:107px;height:28.5px;border:1px solid #9a7a58;border-radius:3px;background:#fff"></div>
<div class="t btn" style="left:44px;width:107px;text-align:center;top:88.2px">Details de la Fira</div>
<div class="t sm" style="top:117px;font-size:8.7px;line-height:8.7px;color:#15161c;-webkit-text-stroke:.15px #15161c">Com arribar-hi</div><div class="abs" style="left:0;top:137.5px;width:230px;height:97.1px;background:#fff;border-top:1px solid #e4e4e4"></div><div class="t nov" style="top:151.40px">NOV.</div><div class="t day" style="top:160.20px">15</div><div class="t sm" style="top:151.03px">15/11/25 - 16/11/25</div><div class="t ttl" style="top:162.60px">Diada de la Fira de<br>Salàs</div><div class="t sm loc" style="top:198.23px"><b>Salàs de Pallars</b> Salàs de<br>Pallars</div><div class="abs img" style="left:162.79999999999995px;top:148.5px;width:59px;height:33px"><svg width="59" height="34" viewBox="0 0 59 34" style="position:absolute;left:0;top:0">
<rect width="59" height="34" fill="#faf5ec"/>
<path d="M10 33.5 L10 25 A19 19 0 0 1 48 25 L48 33.5Z" fill="#ebcf9f"/>
<path d="M16 22 Q22 12 32 16 Q30 20 24 22 Q20 24 16 22Z" fill="#dcb985" opacity=".8"/>
<path d="M11 33.5 L12 28 Q16 25 24 25.5 L29 23 L32 20 L34 22 L35 33.5Z" fill="#8f6a58"/>
<path d="M32 33.5 L33 24 L36 21.5 L39 25 L42 26 L45 25.5 L47 28 L48 33.5Z" fill="#868b98"/>
<path d="M36 33.5 L37 28 L40 29 L40 33.5Z" fill="#3d4456"/>
<path id="arc2" d="M11 16 Q29 -4 48 16" fill="none"/>
<text font-size="6.2" font-weight="bold" fill="#6b4532" letter-spacing=".3"><textPath href="#arc2" startOffset="50%" text-anchor="middle">Fira de Salàs</textPath></text>
</svg></div><div class="abs" style="left:0;top:234.60000000000002px;width:230px;height:85.7px;background:#fff;border-top:1px solid #e4e4e4"></div><div class="t nov" style="top:248.50px">NOV.</div><div class="t day" style="top:257.30px">16</div><div class="t sm" style="top:248.13px">Tot el dia</div><div class="t ttl" style="top:259.70px">Mercat del Trumfo i la<br>Sal a Odèn</div><div class="t sm loc" style="top:295.33000000000004px"><b>Odèn</b> Odèn</div><div class="abs img" style="left:162.79999999999995px;top:245.60000000000002px;width:59px;height:33px"><svg width="59" height="34" viewBox="0 0 59 34" style="position:absolute;left:0;top:0">
<rect width="59" height="34" fill="#fff"/>
<path d="M0 0 L8 0 L4 8 L0 6Z" fill="#c9c9cd" opacity=".8"/>
<g font-family="'Liberation Serif',serif" font-style="italic" font-weight="bold" fill="#b98c55" text-anchor="middle">
<text x="31" y="10.5" font-size="11" textLength="30" lengthAdjust="spacingAndGlyphs">Mercat</text>
<text x="30" y="21" font-size="11" textLength="46" lengthAdjust="spacingAndGlyphs">del trumfo</text>
<text x="29" y="31.5" font-size="11" textLength="30" lengthAdjust="spacingAndGlyphs">i la sal</text></g>
</svg></div><div class="abs" style="left:0;top:320.3px;width:230px;height:85.2px;background:#fff;border-top:1px solid #e4e4e4"></div><div class="t nov" style="top:334.20px">NOV.</div><div class="t day" style="top:343.00px">16</div><div class="t sm" style="top:333.83px">Tot el dia</div><div class="t ttl" style="top:345.40px">Fira del pa i la xocolata<br>a Sant Gregori</div><div class="t sm loc" style="top:381.03000000000003px"><b>Sant Gregori</b> Sant Gregori</div><div class="abs img" style="left:162.79999999999995px;top:331.3px;width:59px;height:33px"><svg width="59" height="33" viewBox="0 0 59 33" style="position:absolute;left:0;top:0">
<rect width="59" height="33" fill="#2b1c1d"/>
<path d="M0 14 Q6 12 10 18 L9 33 L0 33Z" fill="#d6b088"/>
<path d="M44 0 L53 0 L51 7 L46 6Z" fill="#8a5a44"/>
<path d="M52 14 L59 12 L59 20 L54 20Z" fill="#c9a27a"/>
<path d="M50 26 L57 24 L59 33 L50 33Z" fill="#5a3a30"/>
<path d="M5 8 L12 2 L16 10Z" fill="#5d3a2e"/>
<g font-family="'Liberation Serif',serif" font-style="italic" font-weight="bold" fill="#c9a486" stroke="#b4b6bf" stroke-width="2" paint-order="stroke" transform="rotate(-8 29 16)">
<text x="28" y="11" font-size="11" text-anchor="middle" textLength="42" lengthAdjust="spacingAndGlyphs">Fira del</text>
<text x="27" y="21" font-size="10" text-anchor="middle">Pa i</text>
<text x="31" y="31" font-size="11.5" text-anchor="middle" textLength="50" lengthAdjust="spacingAndGlyphs">Xocolata</text>
</g>
</svg></div><div class="abs" style="left:0;top:405.5px;width:230px;height:60px;background:#fff;border-top:1px solid #e4e4e4"></div><div class="t nov" style="top:419.40px">NOV.</div><div class="t day" style="top:428.20px">17</div><div class="t sm" style="top:419.03px">17/11/25 - 20/11/25</div><div class="t ttl" style="top:430.60px">Fira Piscina Barcelona<br>x</div><div class="t sm loc" style="top:466.23px"><b>x</b> x</div><div class="abs img" style="left:162.79999999999995px;top:416.5px;width:59px;height:33px"><svg width="59" height="32" viewBox="0 0 59 32" style="position:absolute;left:0;top:0">
<rect width="59" height="32" fill="#b9d6ef"/>
<rect x="0" y="0" width="59" height="9" fill="#a2c6e8"/>
<rect x="0" y="18" width="59" height="14" fill="#d3e5f4"/>
<rect x="5" y="6" width="12" height="3" fill="#42577a"/>
<rect x="40" y="3" width="2" height="28" fill="#e8f0f8"/>
<rect x="37" y="4" width="3" height="26" fill="#6f9ccc"/>
<rect x="50" y="5" width="7" height="3" fill="#344a6a"/>
<path d="M17 26 L19 20 L21 26Z" fill="#2a3344"/>
<rect x="49" y="20" width="9" height="6" fill="#6d7078"/>
<rect x="1" y="7" width="3" height="3" fill="#e8b65a"/>
</svg></div><div class="abs" style="left:0;top:447px;width:230px;height:42px;background:#f9f8f3;border-top:1px solid #e4e4e4"></div>
<svg class="abs" style="left:8px;top:467px" width="7" height="10" viewBox="0 0 7 10"><path d="M5 1 L1.8 5 L5 9" stroke="#555" stroke-width="1.2" fill="none"/></svg>
<div class="t pgn" style="left:20px;top:469px">Anteriors Fires</div>
<div class="t pgn" style="left:155.7px;top:469px">Següents Fires</div>
<svg class="abs" style="left:215px;top:467px" width="7" height="10" viewBox="0 0 7 10"><path d="M2 1 L5.2 5 L2 9" stroke="#555" stroke-width="1.2" fill="none"/></svg>
  </div>
</div></div>
</body></html>
